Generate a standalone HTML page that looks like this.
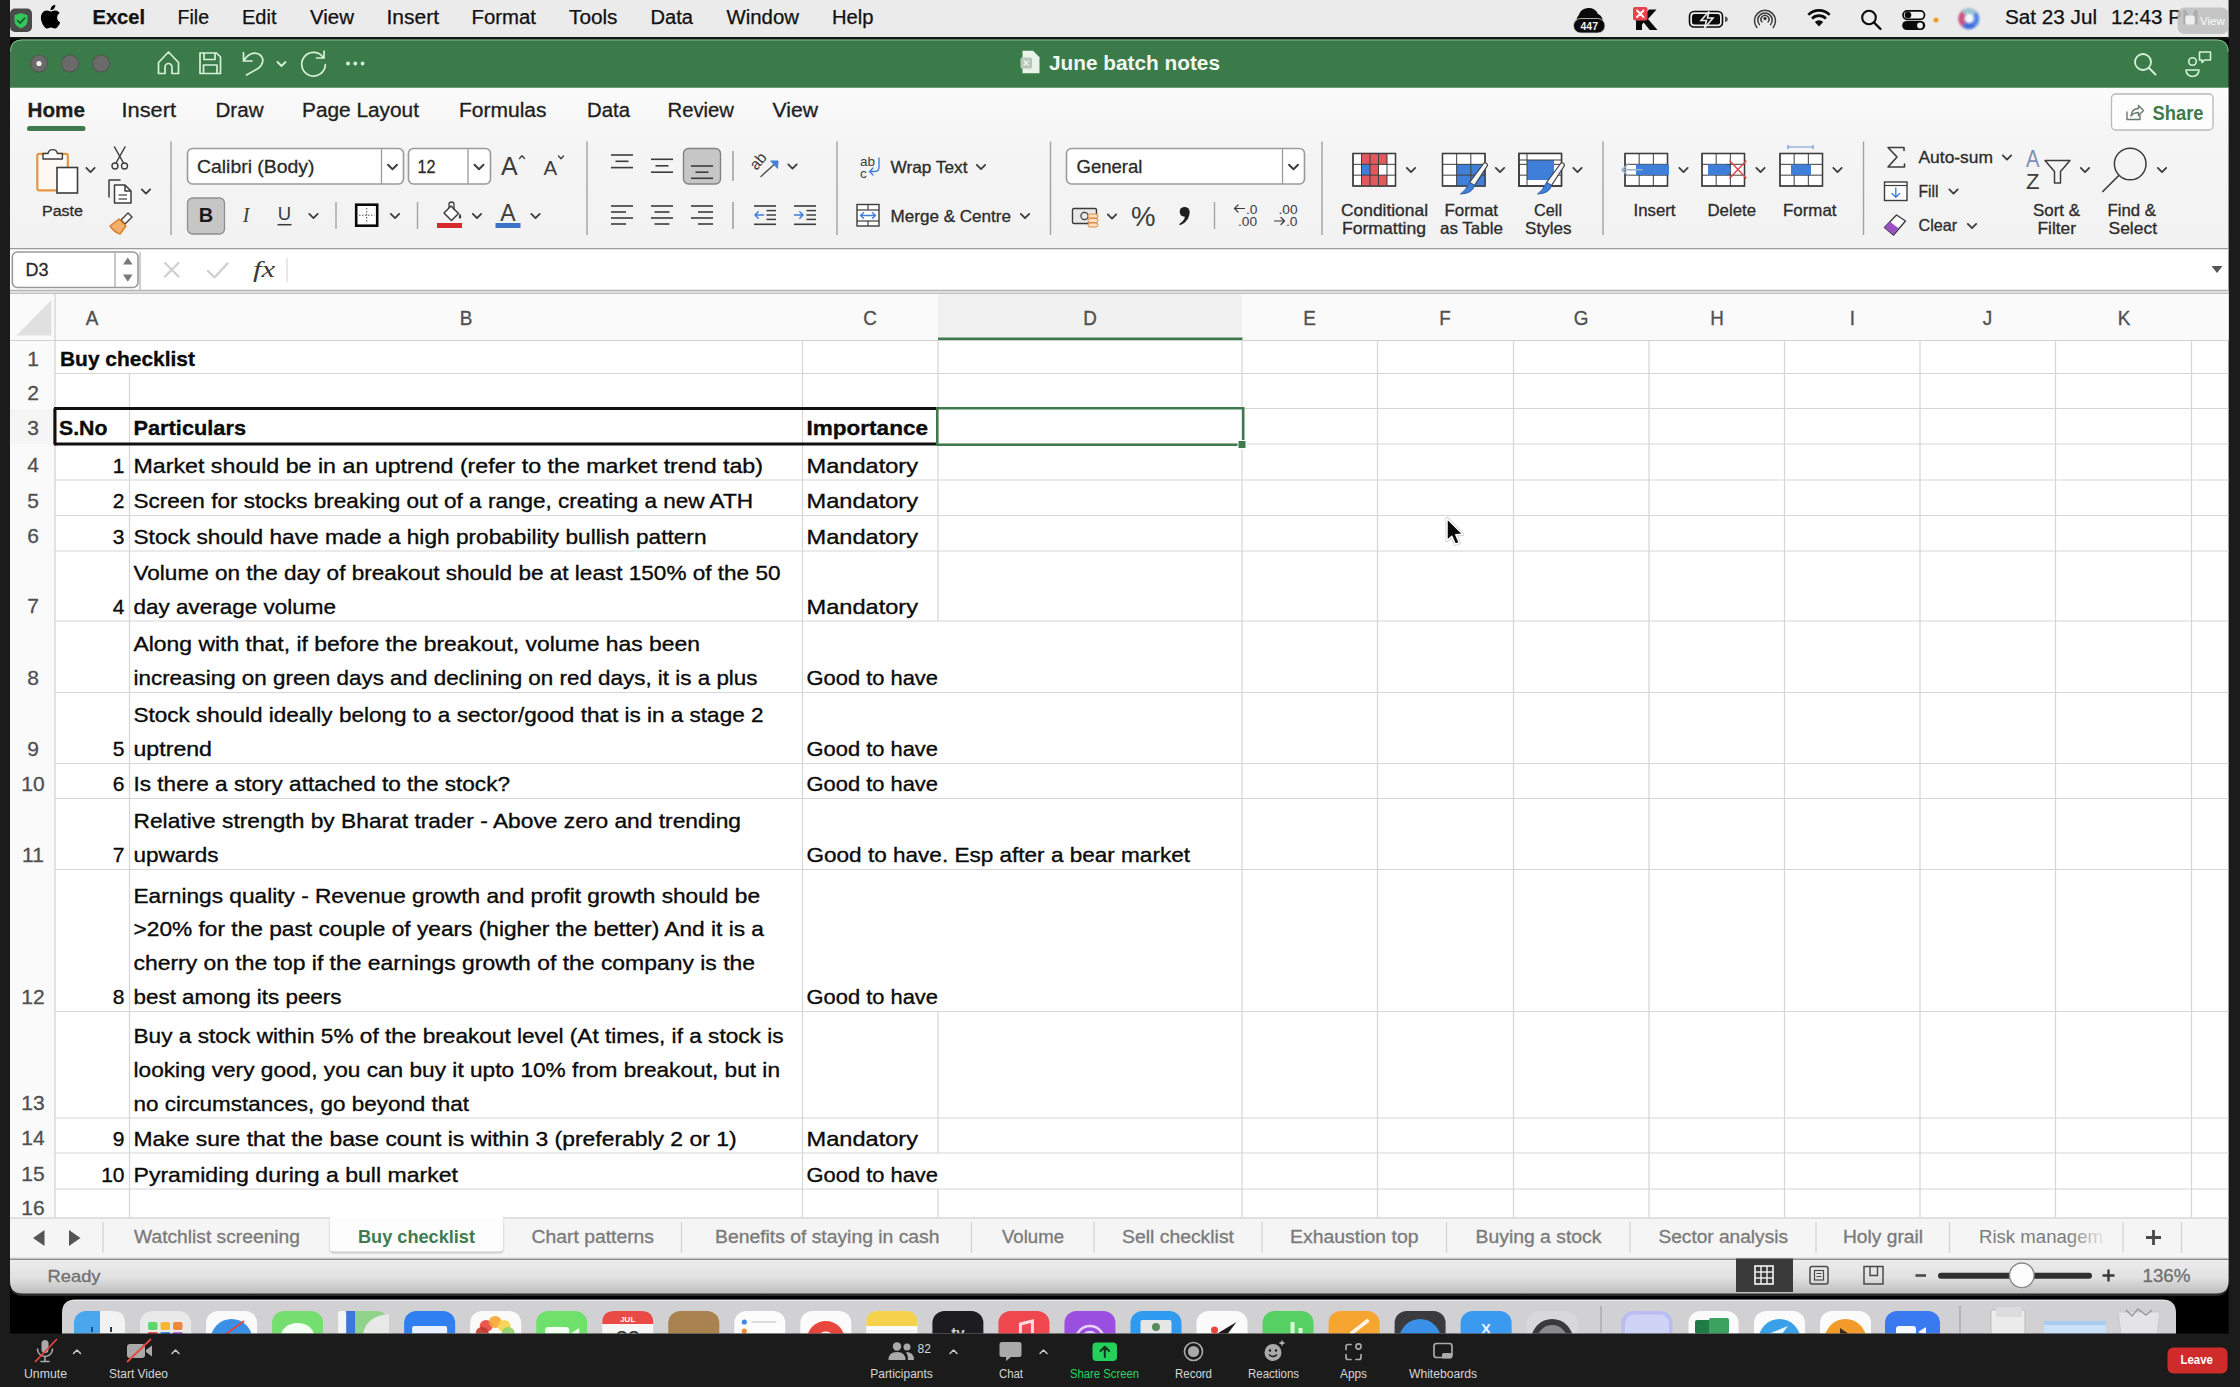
<!DOCTYPE html>
<html lang="en"><head><meta charset="utf-8"><title>June batch notes</title>
<style>
html,body{margin:0;padding:0;background:#000;width:2240px;height:1387px;overflow:hidden}
svg{display:block;font-family:"Liberation Sans",sans-serif}
text{white-space:pre}
</style></head><body>
<svg width="2240" height="1387" viewBox="0 0 2240 1387">
<rect x="0" y="0" width="2240" height="1387" fill="#1b1b1b" />
<rect x="10" y="0" width="2218.6" height="1334" fill="#000" />
<rect x="10" y="0" width="2218.6" height="38" fill="#ebebeb" />
<defs><linearGradient id="rb" x1="0" x2="0" y1="0" y2="1"><stop offset="0" stop-color="#fbfbfb"/><stop offset="0.3" stop-color="#f5f5f5"/><stop offset="1" stop-color="#f2f2f2"/></linearGradient></defs>
<rect x="10" y="87" width="2218.6" height="163" fill="url(#rb)" />
<line x1="10" y1="248.7" x2="2228.6" y2="248.7" stroke="#9c9c9c" stroke-width="1.6" />
<rect x="10" y="249.5" width="2218.6" height="44" fill="#ffffff" />
<rect x="10" y="290" width="2218.6" height="3.8" fill="#dedede" />
<line x1="10" y1="290.4" x2="2228.6" y2="290.4" stroke="#b3b3b3" stroke-width="1.1" />
<line x1="10" y1="293.5" x2="2228.6" y2="293.5" stroke="#c2c2c2" stroke-width="1" />
<rect x="10" y="294" width="2218.6" height="924.4" fill="#ffffff" />
<rect x="10" y="294" width="2218.6" height="46" fill="#fafafa" />
<rect x="10" y="340" width="45" height="878" fill="#fafafa" />
<rect x="938" y="294" width="304" height="45" fill="#f0f1f0" />
<rect x="938" y="337.5" width="304.5" height="3" fill="#3f7a4e" />
<rect x="10" y="408.5" width="45" height="35.5" fill="#f5f5f5" />
<rect x="53" y="408.5" width="2.5" height="36" fill="#3f7a4e" />
<line x1="10" y1="340.5" x2="2228.6" y2="340.5" stroke="#d0d0d0" stroke-width="1.2" />
<line x1="55" y1="294" x2="55" y2="1218" stroke="#d0d0d0" stroke-width="1.2" />
<line x1="55" y1="373.5" x2="2228.6" y2="373.5" stroke="#d6d6d6" stroke-width="1.2" />
<line x1="55" y1="408.5" x2="2228.6" y2="408.5" stroke="#d6d6d6" stroke-width="1.2" />
<line x1="55" y1="444" x2="2228.6" y2="444" stroke="#d6d6d6" stroke-width="1.2" />
<line x1="55" y1="480" x2="2228.6" y2="480" stroke="#d6d6d6" stroke-width="1.2" />
<line x1="55" y1="515.5" x2="2228.6" y2="515.5" stroke="#d6d6d6" stroke-width="1.2" />
<line x1="55" y1="551" x2="2228.6" y2="551" stroke="#d6d6d6" stroke-width="1.2" />
<line x1="55" y1="621" x2="2228.6" y2="621" stroke="#d6d6d6" stroke-width="1.2" />
<line x1="55" y1="692.5" x2="2228.6" y2="692.5" stroke="#d6d6d6" stroke-width="1.2" />
<line x1="55" y1="763.5" x2="2228.6" y2="763.5" stroke="#d6d6d6" stroke-width="1.2" />
<line x1="55" y1="798.5" x2="2228.6" y2="798.5" stroke="#d6d6d6" stroke-width="1.2" />
<line x1="55" y1="869.5" x2="2228.6" y2="869.5" stroke="#d6d6d6" stroke-width="1.2" />
<line x1="55" y1="1011.5" x2="2228.6" y2="1011.5" stroke="#d6d6d6" stroke-width="1.2" />
<line x1="55" y1="1118" x2="2228.6" y2="1118" stroke="#d6d6d6" stroke-width="1.2" />
<line x1="55" y1="1153" x2="2228.6" y2="1153" stroke="#d6d6d6" stroke-width="1.2" />
<line x1="55" y1="1189" x2="2228.6" y2="1189" stroke="#d6d6d6" stroke-width="1.2" />
<line x1="129.5" y1="373.5" x2="129.5" y2="1218" stroke="#d6d6d6" stroke-width="1.2" />
<line x1="802.5" y1="340" x2="802.5" y2="1218" stroke="#d6d6d6" stroke-width="1.2" />
<line x1="938" y1="340" x2="938" y2="621" stroke="#d6d6d6" stroke-width="1.2" />
<line x1="938" y1="1011.5" x2="938" y2="1153" stroke="#d6d6d6" stroke-width="1.2" />
<line x1="938" y1="1189" x2="938" y2="1218" stroke="#d6d6d6" stroke-width="1.2" />
<line x1="1242" y1="340" x2="1242" y2="1218" stroke="#d6d6d6" stroke-width="1.2" />
<line x1="1377.5" y1="340" x2="1377.5" y2="1218" stroke="#d6d6d6" stroke-width="1.2" />
<line x1="1513.5" y1="340" x2="1513.5" y2="1218" stroke="#d6d6d6" stroke-width="1.2" />
<line x1="1649" y1="340" x2="1649" y2="1218" stroke="#d6d6d6" stroke-width="1.2" />
<line x1="1784.5" y1="340" x2="1784.5" y2="1218" stroke="#d6d6d6" stroke-width="1.2" />
<line x1="1920" y1="340" x2="1920" y2="1218" stroke="#d6d6d6" stroke-width="1.2" />
<line x1="2055.5" y1="340" x2="2055.5" y2="1218" stroke="#d6d6d6" stroke-width="1.2" />
<line x1="2191.5" y1="340" x2="2191.5" y2="1218" stroke="#d6d6d6" stroke-width="1.2" />
<path d="M16.500 335.500 L51.300 335.500 L51.300 300 Z" fill="#e0e0e0" />
<text x="85.6966" y="324.8" font-size="21" fill="#505050" textLength="12.6" lengthAdjust="spacingAndGlyphs" stroke="#505050" stroke-width="0.35">A</text>
<text x="459.697" y="324.8" font-size="21" fill="#505050" textLength="12.6" lengthAdjust="spacingAndGlyphs" stroke="#505050" stroke-width="0.35">B</text>
<text x="863.175" y="324.8" font-size="21" fill="#505050" textLength="13.6" lengthAdjust="spacingAndGlyphs" stroke="#505050" stroke-width="0.35">C</text>
<text x="1083.18" y="324.8" font-size="21" fill="#505050" textLength="13.6" lengthAdjust="spacingAndGlyphs" stroke="#505050" stroke-width="0.35">D</text>
<text x="1303.2" y="324.8" font-size="21" fill="#505050" textLength="12.6" lengthAdjust="spacingAndGlyphs" stroke="#505050" stroke-width="0.35">E</text>
<text x="1439.23" y="324.8" font-size="21" fill="#505050" textLength="11.5" lengthAdjust="spacingAndGlyphs" stroke="#505050" stroke-width="0.35">F</text>
<text x="1573.65" y="324.8" font-size="21" fill="#505050" textLength="14.7" lengthAdjust="spacingAndGlyphs" stroke="#505050" stroke-width="0.35">G</text>
<text x="1710.18" y="324.8" font-size="21" fill="#505050" textLength="13.6" lengthAdjust="spacingAndGlyphs" stroke="#505050" stroke-width="0.35">H</text>
<text x="1849.87" y="324.8" font-size="21" fill="#505050" textLength="5.3" lengthAdjust="spacingAndGlyphs" stroke="#505050" stroke-width="0.35">I</text>
<text x="1982.78" y="324.8" font-size="21" fill="#505050" textLength="9.5" lengthAdjust="spacingAndGlyphs" stroke="#505050" stroke-width="0.35">J</text>
<text x="2117.7" y="324.8" font-size="21" fill="#505050" textLength="12.6" lengthAdjust="spacingAndGlyphs" stroke="#505050" stroke-width="0.35">K</text>
<text x="33" y="365.7" font-size="21" fill="#505050" text-anchor="middle" stroke="#505050" stroke-width="0.3">1</text>
<text x="33" y="400.3" font-size="21" fill="#505050" text-anchor="middle" stroke="#505050" stroke-width="0.3">2</text>
<text x="33" y="434.5" font-size="21" fill="#505050" text-anchor="middle" stroke="#505050" stroke-width="0.3">3</text>
<text x="33" y="472.2" font-size="21" fill="#505050" text-anchor="middle" stroke="#505050" stroke-width="0.3">4</text>
<text x="33" y="507.7" font-size="21" fill="#505050" text-anchor="middle" stroke="#505050" stroke-width="0.3">5</text>
<text x="33" y="543.2" font-size="21" fill="#505050" text-anchor="middle" stroke="#505050" stroke-width="0.3">6</text>
<text x="33" y="613.2" font-size="21" fill="#505050" text-anchor="middle" stroke="#505050" stroke-width="0.3">7</text>
<text x="33" y="684.7" font-size="21" fill="#505050" text-anchor="middle" stroke="#505050" stroke-width="0.3">8</text>
<text x="33" y="755.7" font-size="21" fill="#505050" text-anchor="middle" stroke="#505050" stroke-width="0.3">9</text>
<text x="33" y="790.7" font-size="21" fill="#505050" text-anchor="middle" stroke="#505050" stroke-width="0.3">10</text>
<text x="33" y="861.7" font-size="21" fill="#505050" text-anchor="middle" stroke="#505050" stroke-width="0.3">11</text>
<text x="33" y="1003.7" font-size="21" fill="#505050" text-anchor="middle" stroke="#505050" stroke-width="0.3">12</text>
<text x="33" y="1110.2" font-size="21" fill="#505050" text-anchor="middle" stroke="#505050" stroke-width="0.3">13</text>
<text x="33" y="1145.2" font-size="21" fill="#505050" text-anchor="middle" stroke="#505050" stroke-width="0.3">14</text>
<text x="33" y="1181.2" font-size="21" fill="#505050" text-anchor="middle" stroke="#505050" stroke-width="0.3">15</text>
<text x="33" y="1214.8" font-size="21" fill="#505050" text-anchor="middle" stroke="#505050" stroke-width="0.3">16</text>
<rect x="55" y="407" width="883" height="3" fill="#111" />
<rect x="55" y="442.5" width="883" height="3" fill="#111" />
<rect x="54" y="407" width="2.5" height="38.5" fill="#111" />
<text x="60" y="366" font-size="21" fill="#0a0a0a" font-weight="bold" textLength="135" lengthAdjust="spacingAndGlyphs" stroke="#0a0a0a" stroke-width="0.35">Buy checklist</text>
<text x="59" y="434.5" font-size="21" fill="#0a0a0a" font-weight="bold" textLength="48.5" lengthAdjust="spacingAndGlyphs" stroke="#0a0a0a" stroke-width="0.35">S.No</text>
<text x="133.5" y="434.5" font-size="21" fill="#0a0a0a" font-weight="bold" textLength="112.5" lengthAdjust="spacingAndGlyphs" stroke="#0a0a0a" stroke-width="0.35">Particulars</text>
<text x="806.5" y="434.5" font-size="21" fill="#0a0a0a" font-weight="bold" textLength="121.5" lengthAdjust="spacingAndGlyphs" stroke="#0a0a0a" stroke-width="0.35">Importance</text>
<text x="124.5" y="472.7" font-size="21" fill="#0a0a0a" text-anchor="end" stroke="#0a0a0a" stroke-width="0.35">1</text>
<text x="133.5" y="472.7" font-size="21" fill="#0a0a0a" textLength="629.5" lengthAdjust="spacingAndGlyphs" stroke="#0a0a0a" stroke-width="0.35">Market should be in an uptrend (refer to the market trend tab)</text>
<text x="806.5" y="472.7" font-size="21" fill="#0a0a0a" textLength="111.5" lengthAdjust="spacingAndGlyphs" stroke="#0a0a0a" stroke-width="0.35">Mandatory</text>
<text x="124.5" y="508.2" font-size="21" fill="#0a0a0a" text-anchor="end" stroke="#0a0a0a" stroke-width="0.35">2</text>
<text x="133.5" y="508.2" font-size="21" fill="#0a0a0a" textLength="619.5" lengthAdjust="spacingAndGlyphs" stroke="#0a0a0a" stroke-width="0.35">Screen for stocks breaking out of a range, creating a new ATH</text>
<text x="806.5" y="508.2" font-size="21" fill="#0a0a0a" textLength="111.5" lengthAdjust="spacingAndGlyphs" stroke="#0a0a0a" stroke-width="0.35">Mandatory</text>
<text x="124.5" y="543.7" font-size="21" fill="#0a0a0a" text-anchor="end" stroke="#0a0a0a" stroke-width="0.35">3</text>
<text x="133.5" y="543.7" font-size="21" fill="#0a0a0a" textLength="573" lengthAdjust="spacingAndGlyphs" stroke="#0a0a0a" stroke-width="0.35">Stock should have made a high probability bullish pattern</text>
<text x="806.5" y="543.7" font-size="21" fill="#0a0a0a" textLength="111.5" lengthAdjust="spacingAndGlyphs" stroke="#0a0a0a" stroke-width="0.35">Mandatory</text>
<text x="124.5" y="613.7" font-size="21" fill="#0a0a0a" text-anchor="end" stroke="#0a0a0a" stroke-width="0.35">4</text>
<text x="133.5" y="579.8" font-size="21" fill="#0a0a0a" textLength="647" lengthAdjust="spacingAndGlyphs" stroke="#0a0a0a" stroke-width="0.35">Volume on the day of breakout should be at least 150% of the 50</text>
<text x="133.5" y="613.7" font-size="21" fill="#0a0a0a" textLength="202.5" lengthAdjust="spacingAndGlyphs" stroke="#0a0a0a" stroke-width="0.35">day average volume</text>
<text x="806.5" y="613.7" font-size="21" fill="#0a0a0a" textLength="111.5" lengthAdjust="spacingAndGlyphs" stroke="#0a0a0a" stroke-width="0.35">Mandatory</text>
<text x="133.5" y="651.3" font-size="21" fill="#0a0a0a" textLength="566.5" lengthAdjust="spacingAndGlyphs" stroke="#0a0a0a" stroke-width="0.35">Along with that, if before the breakout, volume has been</text>
<text x="133.5" y="685.2" font-size="21" fill="#0a0a0a" textLength="624" lengthAdjust="spacingAndGlyphs" stroke="#0a0a0a" stroke-width="0.35">increasing on green days and declining on red days, it is a plus</text>
<text x="806.5" y="685.2" font-size="21" fill="#0a0a0a" textLength="131.5" lengthAdjust="spacingAndGlyphs" stroke="#0a0a0a" stroke-width="0.35">Good to have</text>
<text x="124.5" y="756.2" font-size="21" fill="#0a0a0a" text-anchor="end" stroke="#0a0a0a" stroke-width="0.35">5</text>
<text x="133.5" y="722.3" font-size="21" fill="#0a0a0a" textLength="630" lengthAdjust="spacingAndGlyphs" stroke="#0a0a0a" stroke-width="0.35">Stock should ideally belong to a sector/good that is in a stage 2</text>
<text x="133.5" y="756.2" font-size="21" fill="#0a0a0a" textLength="78.5" lengthAdjust="spacingAndGlyphs" stroke="#0a0a0a" stroke-width="0.35">uptrend</text>
<text x="806.5" y="756.2" font-size="21" fill="#0a0a0a" textLength="131.5" lengthAdjust="spacingAndGlyphs" stroke="#0a0a0a" stroke-width="0.35">Good to have</text>
<text x="124.5" y="791.2" font-size="21" fill="#0a0a0a" text-anchor="end" stroke="#0a0a0a" stroke-width="0.35">6</text>
<text x="133.5" y="791.2" font-size="21" fill="#0a0a0a" textLength="376.5" lengthAdjust="spacingAndGlyphs" stroke="#0a0a0a" stroke-width="0.35">Is there a story attached to the stock?</text>
<text x="806.5" y="791.2" font-size="21" fill="#0a0a0a" textLength="131.5" lengthAdjust="spacingAndGlyphs" stroke="#0a0a0a" stroke-width="0.35">Good to have</text>
<text x="124.5" y="862.2" font-size="21" fill="#0a0a0a" text-anchor="end" stroke="#0a0a0a" stroke-width="0.35">7</text>
<text x="133.5" y="828.3" font-size="21" fill="#0a0a0a" textLength="607.5" lengthAdjust="spacingAndGlyphs" stroke="#0a0a0a" stroke-width="0.35">Relative strength by Bharat trader - Above zero and trending</text>
<text x="133.5" y="862.2" font-size="21" fill="#0a0a0a" textLength="85" lengthAdjust="spacingAndGlyphs" stroke="#0a0a0a" stroke-width="0.35">upwards</text>
<text x="806.5" y="862.2" font-size="21" fill="#0a0a0a" textLength="383.5" lengthAdjust="spacingAndGlyphs" stroke="#0a0a0a" stroke-width="0.35">Good to have. Esp after a bear market</text>
<text x="124.5" y="1004.2" font-size="21" fill="#0a0a0a" text-anchor="end" stroke="#0a0a0a" stroke-width="0.35">8</text>
<text x="133.5" y="902.5" font-size="21" fill="#0a0a0a" textLength="626.5" lengthAdjust="spacingAndGlyphs" stroke="#0a0a0a" stroke-width="0.35">Earnings quality - Revenue growth and profit growth should be</text>
<text x="133.5" y="936.4" font-size="21" fill="#0a0a0a" textLength="630.5" lengthAdjust="spacingAndGlyphs" stroke="#0a0a0a" stroke-width="0.35">&gt;20% for the past couple of years (higher the better) And it is a</text>
<text x="133.5" y="970.3" font-size="21" fill="#0a0a0a" textLength="621.5" lengthAdjust="spacingAndGlyphs" stroke="#0a0a0a" stroke-width="0.35">cherry on the top if the earnings growth of the company is the</text>
<text x="133.5" y="1004.2" font-size="21" fill="#0a0a0a" textLength="208" lengthAdjust="spacingAndGlyphs" stroke="#0a0a0a" stroke-width="0.35">best among its peers</text>
<text x="806.5" y="1004.2" font-size="21" fill="#0a0a0a" textLength="131.5" lengthAdjust="spacingAndGlyphs" stroke="#0a0a0a" stroke-width="0.35">Good to have</text>
<text x="133.5" y="1042.9" font-size="21" fill="#0a0a0a" textLength="650" lengthAdjust="spacingAndGlyphs" stroke="#0a0a0a" stroke-width="0.35">Buy a stock within 5% of the breakout level (At times, if a stock is</text>
<text x="133.5" y="1076.8" font-size="21" fill="#0a0a0a" textLength="646.5" lengthAdjust="spacingAndGlyphs" stroke="#0a0a0a" stroke-width="0.35">looking very good, you can buy it upto 10% from breakout, but in</text>
<text x="133.5" y="1110.7" font-size="21" fill="#0a0a0a" textLength="335.5" lengthAdjust="spacingAndGlyphs" stroke="#0a0a0a" stroke-width="0.35">no circumstances, go beyond that</text>
<text x="124.5" y="1145.7" font-size="21" fill="#0a0a0a" text-anchor="end" stroke="#0a0a0a" stroke-width="0.35">9</text>
<text x="133.5" y="1145.7" font-size="21" fill="#0a0a0a" textLength="603" lengthAdjust="spacingAndGlyphs" stroke="#0a0a0a" stroke-width="0.35">Make sure that the base count is within 3 (preferably 2 or 1)</text>
<text x="806.5" y="1145.7" font-size="21" fill="#0a0a0a" textLength="111.5" lengthAdjust="spacingAndGlyphs" stroke="#0a0a0a" stroke-width="0.35">Mandatory</text>
<text x="124.5" y="1181.7" font-size="21" fill="#0a0a0a" text-anchor="end" stroke="#0a0a0a" stroke-width="0.35">10</text>
<text x="133.5" y="1181.7" font-size="21" fill="#0a0a0a" textLength="324.5" lengthAdjust="spacingAndGlyphs" stroke="#0a0a0a" stroke-width="0.35">Pyramiding during a bull market</text>
<text x="806.5" y="1181.7" font-size="21" fill="#0a0a0a" textLength="131.5" lengthAdjust="spacingAndGlyphs" stroke="#0a0a0a" stroke-width="0.35">Good to have</text>
<rect x="937.25" y="408.25" width="306" height="36.5" fill="none" stroke="#3f7a4e" stroke-width="2.5" />
<rect x="1238" y="440.5" width="8" height="8" fill="#3f7a4e" stroke="#fff" stroke-width="1" />
<path d="M1447 518.500 L1447 540.500 L1451.800 536.300 L1455.300 544.300 L1459.300 542.700 L1455.800 534.800 L1462.800 534.300 Z" fill="none" stroke="#b0b0b0" stroke-width="3.2" stroke-linejoin="round" opacity="0.6"/>
<path d="M1447 518.500 L1447 540.500 L1451.800 536.300 L1455.300 544.300 L1459.300 542.700 L1455.800 534.800 L1462.800 534.300 Z" fill="#080808" stroke="#fff" stroke-width="1.5" stroke-linejoin="round"/>
<rect x="10" y="8.5" width="22" height="23.5" fill="#4a4a4a" rx="5" />
<path d="M21 13 l6.5 2.2 v5 c0 4.2 -3 6.8 -6.5 8 c-3.5 -1.2 -6.5 -3.8 -6.5 -8 v-5 z" fill="#33c95a" />
<path d="M17.5 20.5 l2.6 2.6 l4.6 -5" fill="none" stroke="#1d5a2d" stroke-width="1.6" stroke-linecap="round" stroke-linejoin="round"/>
<path d="M55.6 17.9c0-3 2.5-4.5 2.6-4.5-1.4-2.1-3.6-2.4-4.4-2.4-1.9-.2-3.6 1.1-4.6 1.1-.9 0-2.4-1.1-3.9-1-2 0-3.9 1.200-4.900 3-2.100 3.600-.5 9 1.500 12 1 1.400 2.200 3.100 3.700 3 1.500-.1 2.100-1 3.900-1 1.800 0 2.300 1 3.900.9 1.600 0 2.700-1.500 3.700-2.900 1.100-1.700 1.600-3.300 1.600-3.400-.1 0-3.100-1.200-3.100-4.800zM52.600 9c.800-1 1.400-2.400 1.200-3.800-1.200.1-2.600.8-3.500 1.800-.8.9-1.400 2.300-1.300 3.700 1.400.1 2.800-.7 3.600-1.700z" fill="#000" transform="translate(1.5 -0.5)"/>
<text x="92.5" y="24.2" font-size="19.5" fill="#111" font-weight="bold" textLength="52.5" lengthAdjust="spacingAndGlyphs" stroke="#111" stroke-width="0.25">Excel</text>
<text x="177.5" y="24.2" font-size="19.5" fill="#111" textLength="31.5" lengthAdjust="spacingAndGlyphs" stroke="#111" stroke-width="0.25">File</text>
<text x="242" y="24.2" font-size="19.5" fill="#111" textLength="34.5" lengthAdjust="spacingAndGlyphs" stroke="#111" stroke-width="0.25">Edit</text>
<text x="310" y="24.2" font-size="19.5" fill="#111" textLength="44" lengthAdjust="spacingAndGlyphs" stroke="#111" stroke-width="0.25">View</text>
<text x="386.5" y="24.2" font-size="19.5" fill="#111" textLength="52.5" lengthAdjust="spacingAndGlyphs" stroke="#111" stroke-width="0.25">Insert</text>
<text x="471.5" y="24.2" font-size="19.5" fill="#111" textLength="64.5" lengthAdjust="spacingAndGlyphs" stroke="#111" stroke-width="0.25">Format</text>
<text x="569" y="24.2" font-size="19.5" fill="#111" textLength="48.5" lengthAdjust="spacingAndGlyphs" stroke="#111" stroke-width="0.25">Tools</text>
<text x="650.5" y="24.2" font-size="19.5" fill="#111" textLength="42.5" lengthAdjust="spacingAndGlyphs" stroke="#111" stroke-width="0.25">Data</text>
<text x="726.5" y="24.2" font-size="19.5" fill="#111" textLength="72.5" lengthAdjust="spacingAndGlyphs" stroke="#111" stroke-width="0.25">Window</text>
<text x="832" y="24.2" font-size="19.5" fill="#111" textLength="41.5" lengthAdjust="spacingAndGlyphs" stroke="#111" stroke-width="0.25">Help</text>
<path d="M1577 22 a6.500 6.500 0 0 1 1.500 -6.500 a10.500 10.500 0 0 1 19.500 -1.500 a7 7 0 0 1 4.500 8 z" fill="#0a0a0a" />
<rect x="1573.5" y="18.5" width="31.5" height="14.5" fill="#0a0a0a" rx="7.2" stroke="#d8d8d8" stroke-width="0.8" />
<text x="1589.3" y="29.8" font-size="10.5" fill="#f0f0f0" font-weight="bold" text-anchor="middle" >447</text>
<path d="M1636 9.500 h6 v8 l7 -8 h7.500 l-8.500 9.500 l9.500 11 h-7.800 l-6 -7.500 l-1.700 1.900 v5.600 h-6 z" fill="#0a0a0a" />
<rect x="1633" y="7" width="14.5" height="13.5" fill="#e8464c" rx="2" />
<path d="M1637 10.500 l6.500 6.500 m0 -6.500 l-6.500 6.500" fill="none" stroke="#fff" stroke-width="1.8" stroke-linecap="round"/>
<rect x="1689.5" y="11.5" width="33" height="15.5" fill="none" rx="4.5" stroke="#0a0a0a" stroke-width="1.6" />
<rect x="1692" y="14" width="28" height="10.5" fill="#0a0a0a" rx="2.5" />
<path d="M1725 16.500 v5.500 a2.500 2.500 0 0 0 0 -5.500z" fill="#555" />
<path d="M1709 11.500 l-8 9 h5.500 l-2 7.500 l8.500 -10 h-5.500 z" fill="#0a0a0a" stroke="#ebebeb" stroke-width="1.6" />
<path d="M1756.81 27.425 A10.5 10.5 0 1 1 1773.19 27.425" fill="none" stroke="#3a3a3a" stroke-width="1.5" stroke-linecap="round"/>
<path d="M1759.38 24.62 A7.2 7.2 0 1 1 1770.62 24.62" fill="none" stroke="#3a3a3a" stroke-width="1.5" stroke-linecap="round"/>
<path d="M1761.88 21.9 A4 4 0 1 1 1768.12 21.9" fill="none" stroke="#3a3a3a" stroke-width="1.5" stroke-linecap="round"/>
<circle cx="1765" cy="18.5" r="1.7" fill="#3a3a3a" />
<path d="M1808.35 14.85 A15 15 0 0 1 1829.65 14.85" fill="none" stroke="#0a0a0a" stroke-width="2.6" stroke-linecap="butt"/>
<path d="M1812.04 18.542 A9.8 9.8 0 0 1 1825.96 18.542" fill="none" stroke="#0a0a0a" stroke-width="2.6" stroke-linecap="butt"/>
<path d="M1819 26.500 l-4.200 -4.600 a6 6 0 0 1 8.400 0 z" fill="#0a0a0a" />
<circle cx="1869" cy="17.5" r="6.8" fill="none" stroke="#0a0a0a" stroke-width="2.1" />
<line x1="1874" y1="22.5" x2="1880.5" y2="29" stroke="#0a0a0a" stroke-width="2.4" stroke-linecap="round"/>
<rect x="1903" y="10.8" width="21.5" height="8.5" fill="#f4f4f4" rx="4.2" stroke="#0a0a0a" stroke-width="1.7" />
<circle cx="1908" cy="15" r="3.3" fill="#0a0a0a" />
<rect x="1902.2" y="21" width="23" height="9" fill="#0a0a0a" rx="4.5" />
<circle cx="1920" cy="25.5" r="2.9" fill="#f0f0f0" />
<circle cx="1936" cy="20" r="2.6" fill="#f0a030" />
<defs><filter id="sblur" x="-20%" y="-20%" width="140%" height="140%"><feGaussianBlur stdDeviation="0.9"/></filter></defs>
<g filter="url(#sblur)">
<circle cx="1968.8" cy="18.8" r="10.6" fill="#8a93c8" />
<path d="M1964.04 24.47 A7.4 7.4 0 0 1 1964.04 13.13" fill="none" stroke="#d2527e" stroke-width="5.6" />
<path d="M1964.04 13.13 A7.4 7.4 0 0 1 1974.47 14.04" fill="none" stroke="#9cc7cf" stroke-width="5.6" />
<path d="M1974.47 14.04 A7.4 7.4 0 0 1 1973.56 24.47" fill="none" stroke="#4f86e6" stroke-width="5.6" />
<path d="M1973.56 24.47 A7.4 7.4 0 0 1 1964.04 24.47" fill="none" stroke="#3a6fe0" stroke-width="5.6" />
<circle cx="1969.3" cy="18.3" r="4.4" fill="#f4f7ff" />
</g>
<text x="2005" y="24.4" font-size="19.5" fill="#111" textLength="92" lengthAdjust="spacingAndGlyphs" stroke="#111" stroke-width="0.25">Sat 23 Jul</text>
<text x="2111" y="24.4" font-size="19.5" fill="#111" textLength="88" lengthAdjust="spacingAndGlyphs" stroke="#111" stroke-width="0.25">12:43 PM</text>
<rect x="2177.5" y="7.5" width="51" height="26.5" fill="#bfbfbf" rx="7" opacity="0.88"/>
<rect x="2185.5" y="15.5" width="9" height="9" fill="#efefef" rx="1.5" />
<text x="2200" y="24.5" font-size="11.5" fill="#fafafa" >View</text>
<rect x="10" y="37" width="2218.6" height="2.5" fill="#151515" />
<path d="M10 87.7 V51.5 Q10 39.5 22 39.5 H2216.6 Q2228.6 39.5 2228.6 51.5 V87.7 Z" fill="#3b7b49" />
<path d="M10.5 51.5 Q10.5 40 22 40 H2216.6 Q2228.1 40 2228.1 51.5" fill="none" stroke="#8fc09a" stroke-width="0.9" />
<circle cx="39" cy="63.5" r="8.5" fill="#6a6a6a" stroke="#50594f" stroke-width="1.2" />
<circle cx="70" cy="63.5" r="8.5" fill="#6a6a6a" stroke="#50594f" stroke-width="1.2" />
<circle cx="101" cy="63.5" r="8.5" fill="#6a6a6a" stroke="#50594f" stroke-width="1.2" />
<circle cx="39" cy="63.5" r="2.6" fill="#f2f2f2" />
<path d="M158.500 62.500 L168.500 52 L178.500 62.500 V73.500 H172 V67 a3.500 3.500 0 0 0 -7 0 V73.500 H158.500 Z" fill="none" stroke="#d6f1da" stroke-width="1.7" stroke-linecap="round" stroke-linejoin="round"/>
<path d="M200 53 H216.500 L220.500 57 V73.500 H200 Z M204 53 V59.500 H215 V53 M203.500 73.500 V65 H217 V73.500" fill="none" stroke="#d6f1da" stroke-width="1.7" stroke-linecap="round" stroke-linejoin="round"/>
<path d="M243.500 52.500 V61 H252 M243.800 60.500 C247 54.500 254 51 259.500 54.500 C265 58.500 263 65 258 68.500 L246.500 75" fill="none" stroke="#d6f1da" stroke-width="1.7" stroke-linecap="round" stroke-linejoin="round"/>
<path d="M277.5 62 L281.5 66 L285.5 62" fill="none" stroke="#d6f1da" stroke-width="1.8" stroke-linecap="round" stroke-linejoin="round"/>
<path d="M324 51 V58 H316.500 M322.800 57 A11.800 11.800 0 1 0 325.300 64.500" fill="none" stroke="#d6f1da" stroke-width="1.7" stroke-linecap="round" stroke-linejoin="round"/>
<circle cx="348" cy="63.5" r="1.9" fill="#d6f1da" />
<circle cx="355.3" cy="63.5" r="1.9" fill="#d6f1da" />
<circle cx="362.6" cy="63.5" r="1.9" fill="#d6f1da" />
<path d="M1022.500 50.800 h10.500 l6.500 6.500 v16 h-17 z" fill="#e9f3ea" />
<rect x="1020.5" y="57.5" width="11.5" height="11" fill="#b4c9b8" rx="1.5" />
<path d="M1023.700 60.500 l5 5 m0 -5 l-5 5" fill="none" stroke="#eef5ef" stroke-width="1.5" />
<text x="1049" y="70" font-size="19.5" fill="#f3f8f3" font-weight="bold" textLength="171" lengthAdjust="spacingAndGlyphs" >June batch notes</text>
<circle cx="2143" cy="62" r="8" fill="none" stroke="#d6f1da" stroke-width="1.8" />
<line x1="2149" y1="68" x2="2155.5" y2="74.5" stroke="#d6f1da" stroke-width="2" stroke-linecap="round"/>
<circle cx="2192.5" cy="61.5" r="3.8" fill="none" stroke="#d6f1da" stroke-width="1.6" />
<path d="M2186 70 h13 a6.500 6.500 0 0 1 -13 0 z" fill="none" stroke="#d6f1da" stroke-width="1.6" stroke-linecap="round" stroke-linejoin="round"/>
<path d="M2199.500 52 h11 v8 h-6 l-2.500 2.500 v-2.500 h-2.500 z" fill="none" stroke="#d6f1da" stroke-width="1.6" stroke-linecap="round" stroke-linejoin="round"/>
<text x="27.5" y="117" font-size="19.5" fill="#1e1e1e" font-weight="bold" textLength="57.5" lengthAdjust="spacingAndGlyphs" stroke="#1e1e1e" stroke-width="0.3">Home</text>
<text x="121.5" y="117" font-size="19.5" fill="#1e1e1e" textLength="54.5" lengthAdjust="spacingAndGlyphs" stroke="#1e1e1e" stroke-width="0.3">Insert</text>
<text x="215.5" y="117" font-size="19.5" fill="#1e1e1e" textLength="48" lengthAdjust="spacingAndGlyphs" stroke="#1e1e1e" stroke-width="0.3">Draw</text>
<text x="302" y="117" font-size="19.5" fill="#1e1e1e" textLength="117" lengthAdjust="spacingAndGlyphs" stroke="#1e1e1e" stroke-width="0.3">Page Layout</text>
<text x="459" y="117" font-size="19.5" fill="#1e1e1e" textLength="87.5" lengthAdjust="spacingAndGlyphs" stroke="#1e1e1e" stroke-width="0.3">Formulas</text>
<text x="587" y="117" font-size="19.5" fill="#1e1e1e" textLength="43" lengthAdjust="spacingAndGlyphs" stroke="#1e1e1e" stroke-width="0.3">Data</text>
<text x="667.5" y="117" font-size="19.5" fill="#1e1e1e" textLength="66.5" lengthAdjust="spacingAndGlyphs" stroke="#1e1e1e" stroke-width="0.3">Review</text>
<text x="772.5" y="117" font-size="19.5" fill="#1e1e1e" textLength="45.5" lengthAdjust="spacingAndGlyphs" stroke="#1e1e1e" stroke-width="0.3">View</text>
<rect x="27" y="126" width="58.5" height="5" fill="#3f7a4e" rx="2.5" />
<rect x="2111.5" y="94" width="101.5" height="36" fill="#fdfdfd" rx="4" stroke="#b9b9b9" stroke-width="1.3" />
<path d="M2127 112 v7.500 h13 v-4 M2131 116 c0.500 -5 3 -7.500 7.500 -7.500 v-3 l5 5 l-5 5 v-3 c-3.500 0 -5.500 1 -7.500 3.500z" fill="none" stroke="#6a7a6e" stroke-width="1.4" stroke-linecap="round" stroke-linejoin="round"/>
<text x="2152.5" y="120.3" font-size="19.5" fill="#3f7a4e" font-weight="bold" textLength="51" lengthAdjust="spacingAndGlyphs" >Share</text>
<rect x="37.3" y="153.8" width="30.5" height="36.5" fill="#fcf8f3" rx="2" stroke="#e8963f" stroke-width="2.2" />
<path d="M43 159 v-5.500 h5 a4.800 4.800 0 0 1 9.400 0 h5 v5.500 z" fill="#fbfbfb" stroke="#3c3c3c" stroke-width="1.4" stroke-linecap="round" stroke-linejoin="round"/>
<rect x="57" y="167.5" width="20.5" height="25.5" fill="#ffffff" stroke="#3c3c3c" stroke-width="1.6" />
<text x="42" y="215.5" font-size="15.5" fill="#2b2b2b" textLength="41" lengthAdjust="spacingAndGlyphs" stroke="#2b2b2b" stroke-width="0.3">Paste</text>
<path d="M86.3 167.9 L90.5 172.1 L94.7 167.9" fill="none" stroke="#3c3c3c" stroke-width="1.8" stroke-linecap="round" stroke-linejoin="round"/>
<path d="M114.500 147 L123.500 163 M125 147 L116 163" fill="none" stroke="#3c3c3c" stroke-width="1.5" stroke-linecap="round" stroke-linejoin="round"/>
<circle cx="115" cy="166" r="3" fill="none" stroke="#3c3c3c" stroke-width="1.4" />
<circle cx="124.5" cy="166" r="3" fill="none" stroke="#3c3c3c" stroke-width="1.4" />
<path d="M109 197 V180 H120" fill="none" stroke="#3c3c3c" stroke-width="1.5" stroke-linecap="round" stroke-linejoin="round"/>
<path d="M114.500 185 H125 L131 191 V203 H114.500 Z M125 185 V191 H131" fill="#fff" stroke="#3c3c3c" stroke-width="1.5" stroke-linecap="round" stroke-linejoin="round"/>
<line x1="118.5" y1="195" x2="127" y2="195" stroke="#3c3c3c" stroke-width="1.2" />
<line x1="118.5" y1="199" x2="127" y2="199" stroke="#3c3c3c" stroke-width="1.2" />
<path d="M141.8 189.4 L146 193.6 L150.2 189.4" fill="none" stroke="#3c3c3c" stroke-width="1.8" stroke-linecap="round" stroke-linejoin="round"/>
<path d="M121 220 l7 -7 l4 4 l-7 7 z" fill="#fff" stroke="#3c3c3c" stroke-width="1.4" stroke-linecap="round" stroke-linejoin="round"/>
<path d="M110 226 l9 -7 l7 7 l-6 8 q-6 -2 -10 -8 z" fill="#f3b06a" stroke="#d97f2b" stroke-width="1.4" stroke-linecap="round" stroke-linejoin="round"/>
<line x1="171" y1="141.5" x2="171" y2="235" stroke="#a3a3a3" stroke-width="1.4" />
<rect x="187.5" y="148.5" width="216" height="35.5" fill="#ffffff" rx="5" stroke="#9a9a9a" stroke-width="1.6" />
<line x1="381.5" y1="149" x2="381.5" y2="184" stroke="#9a9a9a" stroke-width="1.3" />
<text x="197" y="173" font-size="18.5" fill="#2b2b2b" textLength="117.5" lengthAdjust="spacingAndGlyphs" stroke="#2b2b2b" stroke-width="0.3">Calibri (Body)</text>
<path d="M388 164.75 L392.5 169.25 L397 164.75" fill="none" stroke="#3c3c3c" stroke-width="1.9" stroke-linecap="round" stroke-linejoin="round"/>
<rect x="408.5" y="148.5" width="82" height="35.5" fill="#ffffff" rx="5" stroke="#9a9a9a" stroke-width="1.6" />
<line x1="468" y1="149" x2="468" y2="184" stroke="#9a9a9a" stroke-width="1.3" />
<text x="417.5" y="173" font-size="18.5" fill="#2b2b2b" textLength="18" lengthAdjust="spacingAndGlyphs" stroke="#2b2b2b" stroke-width="0.3">12</text>
<path d="M474.5 164.75 L479 169.25 L483.5 164.75" fill="none" stroke="#3c3c3c" stroke-width="1.9" stroke-linecap="round" stroke-linejoin="round"/>
<text x="501" y="175" font-size="25" fill="#3c3c3c" >A</text>
<path d="M519.500 158.500 l2.500 -2.800 l2.500 2.800" fill="none" stroke="#3c3c3c" stroke-width="1.3" stroke-linecap="round" stroke-linejoin="round"/>
<text x="543.5" y="175" font-size="20.5" fill="#3c3c3c" >A</text>
<path d="M558.500 156 l2.500 2.800 l2.500 -2.800" fill="none" stroke="#3c3c3c" stroke-width="1.3" stroke-linecap="round" stroke-linejoin="round"/>
<rect x="187.5" y="198" width="37" height="36" fill="#c6c6c6" rx="5" stroke="#8f8f8f" stroke-width="1.3" />
<text x="206" y="222" font-size="20" fill="#1a1a1a" font-weight="bold" text-anchor="middle" >B</text>
<text x="246" y="221.8" font-size="20" fill="#3c3c3c" text-anchor="middle" font-family="'Liberation Serif',serif" font-style="italic" >I</text>
<text x="284.5" y="220.3" font-size="18.5" fill="#3c3c3c" text-anchor="middle" >U</text>
<line x1="277.5" y1="224.7" x2="291.5" y2="224.7" stroke="#3c3c3c" stroke-width="1.5" />
<path d="M309.3 213.9 L313.5 218.1 L317.7 213.9" fill="none" stroke="#3c3c3c" stroke-width="1.8" stroke-linecap="round" stroke-linejoin="round"/>
<line x1="336" y1="202" x2="336" y2="229" stroke="#a3a3a3" stroke-width="1.4" />
<rect x="356.2" y="204.7" width="21" height="21" fill="#ffffff" stroke="#0a0a0a" stroke-width="2.6" />
<line x1="366.7" y1="208" x2="366.7" y2="223" stroke="#555" stroke-width="1" stroke-dasharray="1.5 1.5"/>
<line x1="359" y1="215.2" x2="374.5" y2="215.2" stroke="#555" stroke-width="1" stroke-dasharray="1.5 1.5"/>
<path d="M390.8 213.9 L395 218.1 L399.2 213.9" fill="none" stroke="#3c3c3c" stroke-width="1.8" stroke-linecap="round" stroke-linejoin="round"/>
<line x1="417.5" y1="202" x2="417.5" y2="229" stroke="#a3a3a3" stroke-width="1.4" />
<path d="M444 213 l7 -7 l7.500 7.500 l-7 7 z" fill="#fff" stroke="#3c3c3c" stroke-width="1.5" stroke-linecap="round" stroke-linejoin="round"/>
<path d="M449 207.500 v-3 a2.500 2.500 0 0 1 5 0 v5" fill="none" stroke="#3c3c3c" stroke-width="1.3" stroke-linecap="round" stroke-linejoin="round"/>
<path d="M460 213.500 q2.500 4 0 5.500 q-2.500 -1.500 0 -5.500z" fill="#3c3c3c" />
<rect x="437" y="223" width="25" height="5" fill="#d8282f" />
<path d="M472.8 213.9 L477 218.1 L481.2 213.9" fill="none" stroke="#3c3c3c" stroke-width="1.8" stroke-linecap="round" stroke-linejoin="round"/>
<text x="508" y="220.5" font-size="23" fill="#3c3c3c" text-anchor="middle" >A</text>
<rect x="495.5" y="223" width="25" height="5" fill="#3c73c9" />
<path d="M531.3 213.9 L535.5 218.1 L539.7 213.9" fill="none" stroke="#3c3c3c" stroke-width="1.8" stroke-linecap="round" stroke-linejoin="round"/>
<line x1="587" y1="141.5" x2="587" y2="235" stroke="#a3a3a3" stroke-width="1.4" />
<line x1="611" y1="155" x2="633" y2="155" stroke="#3c3c3c" stroke-width="1.6" />
<line x1="615.5" y1="161.3" x2="628.5" y2="161.3" stroke="#3c3c3c" stroke-width="1.6" />
<line x1="611" y1="167.6" x2="633" y2="167.6" stroke="#3c3c3c" stroke-width="1.6" />
<line x1="651" y1="159.3" x2="673" y2="159.3" stroke="#3c3c3c" stroke-width="1.6" />
<line x1="655.5" y1="165.8" x2="668.5" y2="165.8" stroke="#3c3c3c" stroke-width="1.6" />
<line x1="651" y1="172.2" x2="673" y2="172.2" stroke="#3c3c3c" stroke-width="1.6" />
<rect x="683.5" y="148.5" width="37" height="35.5" fill="#c6c6c6" rx="5" stroke="#828282" stroke-width="1.4" />
<line x1="691" y1="166" x2="713" y2="166" stroke="#3c3c3c" stroke-width="1.6" />
<line x1="695.5" y1="172.2" x2="708.5" y2="172.2" stroke="#3c3c3c" stroke-width="1.6" />
<line x1="691" y1="178.3" x2="713" y2="178.3" stroke="#3c3c3c" stroke-width="1.6" />
<line x1="733" y1="151" x2="733" y2="181" stroke="#a3a3a3" stroke-width="1.6" />
<line x1="611" y1="206" x2="633" y2="206" stroke="#3c3c3c" stroke-width="1.6" />
<line x1="611" y1="212" x2="626" y2="212" stroke="#3c3c3c" stroke-width="1.6" />
<line x1="611" y1="218" x2="633" y2="218" stroke="#3c3c3c" stroke-width="1.6" />
<line x1="611" y1="224" x2="626" y2="224" stroke="#3c3c3c" stroke-width="1.6" />
<line x1="651" y1="206" x2="673" y2="206" stroke="#3c3c3c" stroke-width="1.6" />
<line x1="654.5" y1="212" x2="669.5" y2="212" stroke="#3c3c3c" stroke-width="1.6" />
<line x1="651" y1="218" x2="673" y2="218" stroke="#3c3c3c" stroke-width="1.6" />
<line x1="654.5" y1="224" x2="669.5" y2="224" stroke="#3c3c3c" stroke-width="1.6" />
<line x1="691" y1="206" x2="713" y2="206" stroke="#3c3c3c" stroke-width="1.6" />
<line x1="698" y1="212" x2="713" y2="212" stroke="#3c3c3c" stroke-width="1.6" />
<line x1="691" y1="218" x2="713" y2="218" stroke="#3c3c3c" stroke-width="1.6" />
<line x1="698" y1="224" x2="713" y2="224" stroke="#3c3c3c" stroke-width="1.6" />
<line x1="733" y1="202" x2="733" y2="229" stroke="#a3a3a3" stroke-width="1.6" />
<text x="0" y="0" font-size="15.5" fill="#3c3c3c" transform="translate(756.500 171) rotate(-50)">ab</text>
<path d="M761 176.500 L777.500 161.500" fill="none" stroke="#555" stroke-width="1.5" stroke-linecap="round" stroke-linejoin="round"/>
<path d="M771 161 L778 161 L777.500 168 Z" fill="#3f7fd9" stroke="#3f7fd9" stroke-width="1" stroke-linecap="round" stroke-linejoin="round"/>
<path d="M788.3 164.4 L792.5 168.6 L796.7 164.4" fill="none" stroke="#3c3c3c" stroke-width="1.8" stroke-linecap="round" stroke-linejoin="round"/>
<line x1="754" y1="206" x2="776" y2="206" stroke="#3c3c3c" stroke-width="1.6" />
<line x1="754" y1="224.3" x2="776" y2="224.3" stroke="#3c3c3c" stroke-width="1.6" />
<line x1="766.5" y1="210.6" x2="776" y2="210.6" stroke="#3c3c3c" stroke-width="1.5" />
<line x1="766.5" y1="215" x2="776" y2="215" stroke="#3c3c3c" stroke-width="1.5" />
<line x1="766.5" y1="219.4" x2="776" y2="219.4" stroke="#3c3c3c" stroke-width="1.5" />
<path d="M763.5 215 H755 M758.2 211.800 l-3.200 3.200 l3.200 3.200" fill="none" stroke="#3f7fd9" stroke-width="1.5" stroke-linecap="round" stroke-linejoin="round"/>
<line x1="794" y1="206" x2="816" y2="206" stroke="#3c3c3c" stroke-width="1.6" />
<line x1="794" y1="224.3" x2="816" y2="224.3" stroke="#3c3c3c" stroke-width="1.6" />
<line x1="806.5" y1="210.6" x2="816" y2="210.6" stroke="#3c3c3c" stroke-width="1.5" />
<line x1="806.5" y1="215" x2="816" y2="215" stroke="#3c3c3c" stroke-width="1.5" />
<line x1="806.5" y1="219.4" x2="816" y2="219.4" stroke="#3c3c3c" stroke-width="1.5" />
<path d="M794.5 215 H803 M799.8 211.800 l3.200 3.200 l-3.200 3.200" fill="none" stroke="#3f7fd9" stroke-width="1.5" stroke-linecap="round" stroke-linejoin="round"/>
<line x1="837" y1="141.5" x2="837" y2="235" stroke="#a3a3a3" stroke-width="1.4" />
<text x="860" y="165.5" font-size="13.5" fill="#3c3c3c" >ab</text>
<text x="860" y="177.5" font-size="13.5" fill="#3c3c3c" >c</text>
<path d="M879 158 v9 q0 4.500 -4 4.500 h-5 M873 168 l-3.500 3.500 l3.500 3.500" fill="none" stroke="#3f7fd9" stroke-width="1.4" stroke-linecap="round" stroke-linejoin="round"/>
<text x="890.5" y="172.5" font-size="16.5" fill="#2b2b2b" textLength="77" lengthAdjust="spacingAndGlyphs" stroke="#2b2b2b" stroke-width="0.3">Wrap Text</text>
<path d="M976.8 164.9 L981 169.1 L985.2 164.9" fill="none" stroke="#3c3c3c" stroke-width="1.8" stroke-linecap="round" stroke-linejoin="round"/>
<rect x="857" y="204.5" width="22" height="21.5" fill="#ffffff" stroke="#3c3c3c" stroke-width="1.4" />
<line x1="857" y1="210" x2="879" y2="210" stroke="#3c3c3c" stroke-width="1.2" />
<line x1="857" y1="221" x2="879" y2="221" stroke="#3c3c3c" stroke-width="1.2" />
<line x1="868" y1="204.5" x2="868" y2="210" stroke="#3c3c3c" stroke-width="1.2" />
<line x1="868" y1="221" x2="868" y2="226" stroke="#3c3c3c" stroke-width="1.2" />
<path d="M860.500 215.500 H875.500 M863.500 212.800 l-3 2.700 l3 2.700 M872.500 212.800 l3 2.700 l-3 2.700" fill="none" stroke="#3f7fd9" stroke-width="1.4" stroke-linecap="round" stroke-linejoin="round"/>
<text x="890.5" y="222" font-size="16.5" fill="#2b2b2b" textLength="120.5" lengthAdjust="spacingAndGlyphs" stroke="#2b2b2b" stroke-width="0.3">Merge &amp; Centre</text>
<path d="M1020.8 213.9 L1025 218.1 L1029.2 213.9" fill="none" stroke="#3c3c3c" stroke-width="1.8" stroke-linecap="round" stroke-linejoin="round"/>
<line x1="1050.5" y1="141.5" x2="1050.5" y2="235" stroke="#a3a3a3" stroke-width="1.4" />
<rect x="1066.5" y="148.5" width="238" height="35.5" fill="#ffffff" rx="5" stroke="#9a9a9a" stroke-width="1.6" />
<line x1="1282.5" y1="149" x2="1282.5" y2="184" stroke="#9a9a9a" stroke-width="1.3" />
<text x="1076.5" y="173" font-size="18.5" fill="#2b2b2b" textLength="66" lengthAdjust="spacingAndGlyphs" stroke="#2b2b2b" stroke-width="0.3">General</text>
<path d="M1289 164.75 L1293.5 169.25 L1298 164.75" fill="none" stroke="#3c3c3c" stroke-width="1.9" stroke-linecap="round" stroke-linejoin="round"/>
<rect x="1072.5" y="208.5" width="24" height="15" fill="#e9e9e9" rx="1.5" stroke="#3c3c3c" stroke-width="1.4" />
<circle cx="1084.5" cy="216" r="3.6" fill="none" stroke="#3c3c3c" stroke-width="1.2" />
<rect x="1088" y="214" width="10" height="4" fill="#fbe0c4" rx="2" stroke="#e08a3c" stroke-width="1" />
<rect x="1088" y="218.5" width="10" height="4" fill="#fbe0c4" rx="2" stroke="#e08a3c" stroke-width="1" />
<rect x="1088" y="223" width="10" height="4" fill="#fbe0c4" rx="2" stroke="#e08a3c" stroke-width="1" />
<path d="M1107.8 214.4 L1112 218.6 L1116.2 214.4" fill="none" stroke="#3c3c3c" stroke-width="1.8" stroke-linecap="round" stroke-linejoin="round"/>
<text x="1131" y="226" font-size="27.5" fill="#3c3c3c" textLength="24.5" lengthAdjust="spacingAndGlyphs" >%</text>
<circle cx="1184.6" cy="211.8" r="4.9" fill="#1f1f1f" />
<path d="M1189.500 211 q1.200 9.500 -9.500 14.300 l-0.800 -1.300 q6 -3.500 5.800 -9z" fill="#1f1f1f" />
<line x1="1214.5" y1="202" x2="1214.5" y2="229" stroke="#a3a3a3" stroke-width="1.4" />
<path d="M1234.500 208.500 h10 M1238 205 l-3.500 3.500 l3.500 3.500" fill="none" stroke="#3c3c3c" stroke-width="1.2" stroke-linecap="round" stroke-linejoin="round"/>
<text x="1246" y="213.8" font-size="13.5" fill="#3c3c3c" textLength="11.5" lengthAdjust="spacingAndGlyphs" >.0</text>
<text x="1238" y="226.2" font-size="13.5" fill="#3c3c3c" textLength="19" lengthAdjust="spacingAndGlyphs" >.00</text>
<text x="1278.5" y="213.8" font-size="13.5" fill="#3c3c3c" textLength="19" lengthAdjust="spacingAndGlyphs" >.00</text>
<path d="M1274.500 221 h10 M1281 217.500 l3.500 3.500 l-3.500 3.500" fill="none" stroke="#3c3c3c" stroke-width="1.2" stroke-linecap="round" stroke-linejoin="round"/>
<text x="1286" y="226.2" font-size="13.5" fill="#3c3c3c" textLength="11.5" lengthAdjust="spacingAndGlyphs" >.0</text>
<line x1="1322" y1="141.5" x2="1322" y2="235" stroke="#a3a3a3" stroke-width="1.4" />
<rect x="1353" y="153.5" width="42.5" height="32.5" fill="#ffffff" stroke="#3c3c3c" stroke-width="1.3" />
<rect x="1361.5" y="153.5" width="8.5" height="10.8333" fill="#e0575c" />
<rect x="1370" y="153.5" width="8.5" height="10.8333" fill="#e0575c" />
<rect x="1378.5" y="153.5" width="8.5" height="10.8333" fill="#e0575c" />
<rect x="1361.5" y="164.333" width="8.5" height="10.8333" fill="#3f7fd9" />
<rect x="1370" y="164.333" width="8.5" height="10.8333" fill="#e0575c" />
<rect x="1361.5" y="175.167" width="8.5" height="10.8333" fill="#e0575c" />
<rect x="1370" y="175.167" width="8.5" height="10.8333" fill="#e0575c" />
<rect x="1378.5" y="175.167" width="8.5" height="10.8333" fill="#e0575c" />
<line x1="1361.5" y1="153.5" x2="1361.5" y2="186" stroke="#3c3c3c" stroke-width="1" />
<line x1="1370" y1="153.5" x2="1370" y2="186" stroke="#3c3c3c" stroke-width="1" />
<line x1="1378.5" y1="153.5" x2="1378.5" y2="186" stroke="#3c3c3c" stroke-width="1" />
<line x1="1387" y1="153.5" x2="1387" y2="186" stroke="#3c3c3c" stroke-width="1" />
<line x1="1353" y1="164.333" x2="1395.5" y2="164.333" stroke="#3c3c3c" stroke-width="1" />
<line x1="1353" y1="175.167" x2="1395.5" y2="175.167" stroke="#3c3c3c" stroke-width="1" />
<rect x="1353" y="153.5" width="42.5" height="32.5" fill="none" stroke="#3c3c3c" stroke-width="1.3" />
<path d="M1406.8 167.9 L1411 172.1 L1415.2 167.9" fill="none" stroke="#3c3c3c" stroke-width="1.8" stroke-linecap="round" stroke-linejoin="round"/>
<text x="1341" y="215.5" font-size="16.5" fill="#2b2b2b" textLength="87" lengthAdjust="spacingAndGlyphs" stroke="#2b2b2b" stroke-width="0.3">Conditional</text>
<text x="1342" y="233.5" font-size="16.5" fill="#2b2b2b" textLength="84" lengthAdjust="spacingAndGlyphs" stroke="#2b2b2b" stroke-width="0.3">Formatting</text>
<rect x="1442.5" y="153.5" width="42.5" height="32.5" fill="#ffffff" stroke="#3c3c3c" stroke-width="1.3" />
<rect x="1456.67" y="164.333" width="14.1667" height="10.8333" fill="#3f7fd9" />
<rect x="1470.83" y="164.333" width="14.1667" height="10.8333" fill="#3f7fd9" />
<rect x="1456.67" y="175.167" width="14.1667" height="10.8333" fill="#3f7fd9" />
<rect x="1470.83" y="175.167" width="14.1667" height="10.8333" fill="#3f7fd9" />
<line x1="1456.67" y1="153.5" x2="1456.67" y2="186" stroke="#3c3c3c" stroke-width="1" />
<line x1="1470.83" y1="153.5" x2="1470.83" y2="186" stroke="#3c3c3c" stroke-width="1" />
<line x1="1442.5" y1="164.333" x2="1485" y2="164.333" stroke="#3c3c3c" stroke-width="1" />
<line x1="1442.5" y1="175.167" x2="1485" y2="175.167" stroke="#3c3c3c" stroke-width="1" />
<rect x="1442.5" y="153.5" width="42.5" height="32.5" fill="none" stroke="#3c3c3c" stroke-width="1.3" />
<path d="M1484 163 q3 -1 3.500 2.500 l-13 20 l-5 -3 z" fill="#f6f6f6" stroke="#3c3c3c" stroke-width="1.2" stroke-linecap="round" stroke-linejoin="round"/>
<path d="M1469.5 182.5 l5 3 q-2 8 -14 8.500 q5 -3 9 -11.500z" fill="#3f7fd9" stroke="#2a5fa8" stroke-width="1" stroke-linecap="round" stroke-linejoin="round"/>
<path d="M1495.8 167.9 L1500 172.1 L1504.2 167.9" fill="none" stroke="#3c3c3c" stroke-width="1.8" stroke-linecap="round" stroke-linejoin="round"/>
<text x="1444.5" y="215.5" font-size="16.5" fill="#2b2b2b" textLength="53.5" lengthAdjust="spacingAndGlyphs" stroke="#2b2b2b" stroke-width="0.3">Format</text>
<text x="1440" y="233.5" font-size="16.5" fill="#2b2b2b" textLength="63" lengthAdjust="spacingAndGlyphs" stroke="#2b2b2b" stroke-width="0.3">as Table</text>
<rect x="1519" y="153.5" width="42.5" height="32.5" fill="#ffffff" stroke="#3c3c3c" stroke-width="1.3" />
<rect x="1519" y="153.5" width="42.5" height="10.8333" fill="#fff" />
<line x1="1519" y1="164.333" x2="1561.5" y2="164.333" stroke="#3c3c3c" stroke-width="1" />
<line x1="1519" y1="175.167" x2="1561.5" y2="175.167" stroke="#3c3c3c" stroke-width="1" />
<rect x="1519" y="153.5" width="42.5" height="32.5" fill="none" stroke="#3c3c3c" stroke-width="1.3" />
<rect x="1527" y="160" width="27" height="20" fill="#3f7fd9" />
<rect x="1519" y="153.5" width="42.5" height="32.5" fill="none" stroke="#3c3c3c" stroke-width="1.3" />
<line x1="1527" y1="153.5" x2="1527" y2="186" stroke="#3c3c3c" stroke-width="1" />
<line x1="1519" y1="160" x2="1561.5" y2="160" stroke="#3c3c3c" stroke-width="1" />
<path d="M1561 163 q3 -1 3.500 2.500 l-13 20 l-5 -3 z" fill="#f6f6f6" stroke="#3c3c3c" stroke-width="1.2" stroke-linecap="round" stroke-linejoin="round"/>
<path d="M1546.5 182.5 l5 3 q-2 8 -14 8.500 q5 -3 9 -11.500z" fill="#3f7fd9" stroke="#2a5fa8" stroke-width="1" stroke-linecap="round" stroke-linejoin="round"/>
<path d="M1573.3 167.9 L1577.5 172.1 L1581.7 167.9" fill="none" stroke="#3c3c3c" stroke-width="1.8" stroke-linecap="round" stroke-linejoin="round"/>
<text x="1534" y="215.5" font-size="16.5" fill="#2b2b2b" textLength="28" lengthAdjust="spacingAndGlyphs" stroke="#2b2b2b" stroke-width="0.3">Cell</text>
<text x="1525" y="233.5" font-size="16.5" fill="#2b2b2b" textLength="46.5" lengthAdjust="spacingAndGlyphs" stroke="#2b2b2b" stroke-width="0.3">Styles</text>
<line x1="1603" y1="141.5" x2="1603" y2="235" stroke="#a3a3a3" stroke-width="1.4" />
<rect x="1625" y="153.5" width="42.5" height="32.5" fill="#ffffff" stroke="#3c3c3c" stroke-width="1.3" />
<rect x="1639.17" y="164.333" width="14.1667" height="10.8333" fill="#3f7fd9" />
<rect x="1653.33" y="164.333" width="14.1667" height="10.8333" fill="#3f7fd9" />
<line x1="1639.17" y1="153.5" x2="1639.17" y2="186" stroke="#3c3c3c" stroke-width="1" />
<line x1="1653.33" y1="153.5" x2="1653.33" y2="186" stroke="#3c3c3c" stroke-width="1" />
<line x1="1625" y1="164.333" x2="1667.5" y2="164.333" stroke="#3c3c3c" stroke-width="1" />
<line x1="1625" y1="175.167" x2="1667.5" y2="175.167" stroke="#3c3c3c" stroke-width="1" />
<rect x="1625" y="153.5" width="42.5" height="32.5" fill="none" stroke="#3c3c3c" stroke-width="1.3" />
<rect x="1636" y="164.5" width="33" height="10.5" fill="#3f7fd9" />
<path d="M1622 169.800 H1642 M1628 164 l-6 5.800 l6 5.800" fill="none" stroke="#9ab0c9" stroke-width="1.6" stroke-linecap="round" stroke-linejoin="round"/>
<path d="M1679.3 167.9 L1683.5 172.1 L1687.7 167.9" fill="none" stroke="#3c3c3c" stroke-width="1.8" stroke-linecap="round" stroke-linejoin="round"/>
<text x="1633.5" y="215.5" font-size="16.5" fill="#2b2b2b" textLength="42" lengthAdjust="spacingAndGlyphs" stroke="#2b2b2b" stroke-width="0.3">Insert</text>
<rect x="1702" y="153.5" width="42.5" height="32.5" fill="#ffffff" stroke="#3c3c3c" stroke-width="1.3" />
<rect x="1716.17" y="164.333" width="14.1667" height="10.8333" fill="#3f7fd9" />
<line x1="1716.17" y1="153.5" x2="1716.17" y2="186" stroke="#3c3c3c" stroke-width="1" />
<line x1="1730.33" y1="153.5" x2="1730.33" y2="186" stroke="#3c3c3c" stroke-width="1" />
<line x1="1702" y1="164.333" x2="1744.5" y2="164.333" stroke="#3c3c3c" stroke-width="1" />
<line x1="1702" y1="175.167" x2="1744.5" y2="175.167" stroke="#3c3c3c" stroke-width="1" />
<rect x="1702" y="153.5" width="42.5" height="32.5" fill="none" stroke="#3c3c3c" stroke-width="1.3" />
<path d="M1708 164.500 h18 l5 5.300 l-5 5.300 h-18 z" fill="#3f7fd9" />
<path d="M1730 161 l16 17 M1746 161 l-16 17" fill="none" stroke="#e0474c" stroke-width="1.5" stroke-linecap="round" stroke-linejoin="round"/>
<path d="M1756.3 167.9 L1760.5 172.1 L1764.7 167.9" fill="none" stroke="#3c3c3c" stroke-width="1.8" stroke-linecap="round" stroke-linejoin="round"/>
<text x="1707.5" y="215.5" font-size="16.5" fill="#2b2b2b" textLength="48.5" lengthAdjust="spacingAndGlyphs" stroke="#2b2b2b" stroke-width="0.3">Delete</text>
<rect x="1780" y="153.5" width="42.5" height="32.5" fill="#ffffff" stroke="#3c3c3c" stroke-width="1.3" />
<rect x="1794.17" y="164.333" width="14.1667" height="10.8333" fill="#3f7fd9" />
<line x1="1794.17" y1="153.5" x2="1794.17" y2="186" stroke="#3c3c3c" stroke-width="1" />
<line x1="1808.33" y1="153.5" x2="1808.33" y2="186" stroke="#3c3c3c" stroke-width="1" />
<line x1="1780" y1="164.333" x2="1822.5" y2="164.333" stroke="#3c3c3c" stroke-width="1" />
<line x1="1780" y1="175.167" x2="1822.5" y2="175.167" stroke="#3c3c3c" stroke-width="1" />
<rect x="1780" y="153.5" width="42.5" height="32.5" fill="none" stroke="#3c3c3c" stroke-width="1.3" />
<rect x="1791" y="164.5" width="20" height="10.5" fill="#3f7fd9" />
<path d="M1788 147 H1813 M1788 145 v4 M1813 145 v4" fill="none" stroke="#6a9ad6" stroke-width="1.2" />
<path d="M1833.3 167.9 L1837.5 172.1 L1841.7 167.9" fill="none" stroke="#3c3c3c" stroke-width="1.8" stroke-linecap="round" stroke-linejoin="round"/>
<text x="1783" y="215.5" font-size="16.5" fill="#2b2b2b" textLength="53.5" lengthAdjust="spacingAndGlyphs" stroke="#2b2b2b" stroke-width="0.3">Format</text>
<line x1="1863.5" y1="141.5" x2="1863.5" y2="235" stroke="#a3a3a3" stroke-width="1.4" />
<path d="M1904 150.500 V147.500 H1888 L1897 157 L1888 167 H1904.500 V164" fill="none" stroke="#3c3c3c" stroke-width="1.6" stroke-linecap="round" stroke-linejoin="round"/>
<text x="1918.5" y="162.5" font-size="16.5" fill="#2b2b2b" textLength="74.5" lengthAdjust="spacingAndGlyphs" stroke="#2b2b2b" stroke-width="0.3">Auto-sum</text>
<path d="M2002.8 155.4 L2007 159.6 L2011.2 155.4" fill="none" stroke="#3c3c3c" stroke-width="1.8" stroke-linecap="round" stroke-linejoin="round"/>
<rect x="1884.5" y="182" width="22.5" height="18.5" fill="#ffffff" stroke="#3c3c3c" stroke-width="1.4" />
<line x1="1884.5" y1="185.5" x2="1907" y2="185.5" stroke="#3c3c3c" stroke-width="1.2" />
<path d="M1895.800 188 v9 M1892 193.500 l3.800 3.800 l3.800 -3.800" fill="none" stroke="#3f7fd9" stroke-width="1.4" stroke-linecap="round" stroke-linejoin="round"/>
<text x="1918.5" y="197" font-size="16.5" fill="#2b2b2b" textLength="20" lengthAdjust="spacingAndGlyphs" stroke="#2b2b2b" stroke-width="0.3">Fill</text>
<path d="M1949.3 189.4 L1953.5 193.6 L1957.7 189.4" fill="none" stroke="#3c3c3c" stroke-width="1.8" stroke-linecap="round" stroke-linejoin="round"/>
<path d="M1884.500 227.500 l12 -12.500 l9 6 l-12 14 z" fill="#ffffff" stroke="#3c3c3c" stroke-width="1.4" stroke-linecap="round" stroke-linejoin="round"/>
<path d="M1884.500 227.500 l5.500 -5.700 l8.500 6.500 l-5 6.200 z" fill="#9b4fc4" />
<text x="1918.5" y="231" font-size="16.5" fill="#2b2b2b" textLength="38.5" lengthAdjust="spacingAndGlyphs" stroke="#2b2b2b" stroke-width="0.3">Clear</text>
<path d="M1967.8 223.9 L1972 228.1 L1976.2 223.9" fill="none" stroke="#3c3c3c" stroke-width="1.8" stroke-linecap="round" stroke-linejoin="round"/>
<text x="2026" y="167.2" font-size="23.5" fill="#7d8fb3" textLength="13.5" lengthAdjust="spacingAndGlyphs" >A</text>
<text x="2026" y="188.7" font-size="22.5" fill="#3c3c3c" textLength="13.5" lengthAdjust="spacingAndGlyphs" >Z</text>
<path d="M2045 160.500 h25 l-9.500 11 v11.500 h-6 v-11.500 z" fill="none" stroke="#3c3c3c" stroke-width="1.5" stroke-linecap="round" stroke-linejoin="round"/>
<path d="M2080.8 167.9 L2085 172.1 L2089.2 167.9" fill="none" stroke="#3c3c3c" stroke-width="1.8" stroke-linecap="round" stroke-linejoin="round"/>
<text x="2033" y="215.5" font-size="16.5" fill="#2b2b2b" textLength="47" lengthAdjust="spacingAndGlyphs" stroke="#2b2b2b" stroke-width="0.3">Sort &amp;</text>
<text x="2037.5" y="233.5" font-size="16.5" fill="#2b2b2b" textLength="38.5" lengthAdjust="spacingAndGlyphs" stroke="#2b2b2b" stroke-width="0.3">Filter</text>
<circle cx="2130.2" cy="164" r="15.8" fill="none" stroke="#3c3c3c" stroke-width="1.5" />
<line x1="2118.8" y1="175.5" x2="2102.8" y2="191.5" stroke="#3c3c3c" stroke-width="1.7" stroke-linecap="round"/>
<path d="M2157.8 167.9 L2162 172.1 L2166.2 167.9" fill="none" stroke="#3c3c3c" stroke-width="1.8" stroke-linecap="round" stroke-linejoin="round"/>
<text x="2107.5" y="215.5" font-size="16.5" fill="#2b2b2b" textLength="48.5" lengthAdjust="spacingAndGlyphs" stroke="#2b2b2b" stroke-width="0.3">Find &amp;</text>
<text x="2108.5" y="233.5" font-size="16.5" fill="#2b2b2b" textLength="48.5" lengthAdjust="spacingAndGlyphs" stroke="#2b2b2b" stroke-width="0.3">Select</text>
<rect x="12.3" y="252" width="125.7" height="35.5" fill="#ffffff" rx="5" stroke="#999" stroke-width="1.6" />
<line x1="115" y1="253" x2="115" y2="287" stroke="#a9a9a9" stroke-width="1.3" />
<text x="25.5" y="275.6" font-size="18.5" fill="#2a2a2a" textLength="23" lengthAdjust="spacingAndGlyphs" stroke="#2a2a2a" stroke-width="0.3">D3</text>
<path d="M123 264.500 l4.800 -7 l4.800 7z" fill="#7a7a7a" />
<path d="M123 274.500 l4.800 7.300 l4.800 -7.300z" fill="#7a7a7a" />
<line x1="140" y1="252" x2="140" y2="290" stroke="#cfcfcf" stroke-width="2" />
<path d="M165 263 l13.500 13.500 M178.500 263 l-13.500 13.500" fill="none" stroke="#cfcfcf" stroke-width="2.2" stroke-linecap="round" stroke-linejoin="round"/>
<path d="M208 271 l6.500 6.500 l13 -14" fill="none" stroke="#cfcfcf" stroke-width="2.4" stroke-linecap="round" stroke-linejoin="round"/>
<text x="253" y="277" font-size="24" fill="#3a3a3a" textLength="22" lengthAdjust="spacingAndGlyphs" font-family="'Liberation Serif',serif" font-style="italic" >fx</text>
<line x1="287" y1="258" x2="287" y2="282" stroke="#d9d9d9" stroke-width="1.2" />
<path d="M2211.500 266 h11 l-5.500 7 z" fill="#555" />
<rect x="10" y="1217.5" width="2218.6" height="41.5" fill="#f5f5f5" />
<line x1="10" y1="1218" x2="2228.6" y2="1218" stroke="#c9c9c9" stroke-width="1.2" />
<line x1="10" y1="1258.5" x2="2228.6" y2="1258.5" stroke="#c4c4c4" stroke-width="1.5" />
<path d="M44.500 1230 v16 l-11.500 -8 z" fill="#555" />
<path d="M69 1230 v16 l11.500 -8 z" fill="#555" />
<line x1="103" y1="1222" x2="103" y2="1253" stroke="#d4d4d4" stroke-width="1.3" />
<line x1="681.5" y1="1222" x2="681.5" y2="1253" stroke="#d4d4d4" stroke-width="1.3" />
<line x1="971.5" y1="1222" x2="971.5" y2="1253" stroke="#d4d4d4" stroke-width="1.3" />
<line x1="1094" y1="1222" x2="1094" y2="1253" stroke="#d4d4d4" stroke-width="1.3" />
<line x1="1262" y1="1222" x2="1262" y2="1253" stroke="#d4d4d4" stroke-width="1.3" />
<line x1="1446.5" y1="1222" x2="1446.5" y2="1253" stroke="#d4d4d4" stroke-width="1.3" />
<line x1="1630" y1="1222" x2="1630" y2="1253" stroke="#d4d4d4" stroke-width="1.3" />
<line x1="1816" y1="1222" x2="1816" y2="1253" stroke="#d4d4d4" stroke-width="1.3" />
<line x1="1949.5" y1="1222" x2="1949.5" y2="1253" stroke="#d4d4d4" stroke-width="1.3" />
<line x1="2123" y1="1222" x2="2123" y2="1253" stroke="#d4d4d4" stroke-width="1.3" />
<line x1="2181.5" y1="1222" x2="2181.5" y2="1253" stroke="#d4d4d4" stroke-width="1.3" />
<defs><filter id="ts" x="-5%" y="-5%" width="110%" height="130%"><feGaussianBlur stdDeviation="1.2"/></filter></defs>
<rect x="330" y="1219" width="173" height="34" fill="#bdbdbd" rx="3" filter="url(#ts)"/>
<path d="M330 1217 H503 V1248.500 Q503 1251.500 500 1251.500 H333 Q330 1251.500 330 1248.500 Z" fill="#fdfdfd" />
<text x="134" y="1242.5" font-size="17.5" fill="#7a7a7a" textLength="166" lengthAdjust="spacingAndGlyphs" stroke="#7a7a7a" stroke-width="0.3">Watchlist screening</text>
<text x="531.5" y="1242.5" font-size="17.5" fill="#7a7a7a" textLength="122.5" lengthAdjust="spacingAndGlyphs" stroke="#7a7a7a" stroke-width="0.3">Chart patterns</text>
<text x="715" y="1242.5" font-size="17.5" fill="#7a7a7a" textLength="224.5" lengthAdjust="spacingAndGlyphs" stroke="#7a7a7a" stroke-width="0.3">Benefits of staying in cash</text>
<text x="1002" y="1242.5" font-size="17.5" fill="#7a7a7a" textLength="62" lengthAdjust="spacingAndGlyphs" stroke="#7a7a7a" stroke-width="0.3">Volume</text>
<text x="1122" y="1242.5" font-size="17.5" fill="#7a7a7a" textLength="112" lengthAdjust="spacingAndGlyphs" stroke="#7a7a7a" stroke-width="0.3">Sell checklist</text>
<text x="1290" y="1242.5" font-size="17.5" fill="#7a7a7a" textLength="128.5" lengthAdjust="spacingAndGlyphs" stroke="#7a7a7a" stroke-width="0.3">Exhaustion top</text>
<text x="1475.5" y="1242.5" font-size="17.5" fill="#7a7a7a" textLength="126" lengthAdjust="spacingAndGlyphs" stroke="#7a7a7a" stroke-width="0.3">Buying a stock</text>
<text x="1658.5" y="1242.5" font-size="17.5" fill="#7a7a7a" textLength="129.5" lengthAdjust="spacingAndGlyphs" stroke="#7a7a7a" stroke-width="0.3">Sector analysis</text>
<text x="1843" y="1242.5" font-size="17.5" fill="#7a7a7a" textLength="80" lengthAdjust="spacingAndGlyphs" stroke="#7a7a7a" stroke-width="0.3">Holy grail</text>
<text x="358" y="1242.5" font-size="17.5" fill="#3f7a50" font-weight="bold" textLength="117" lengthAdjust="spacingAndGlyphs" >Buy checklist</text>
<defs><linearGradient id="fade" x1="0" x2="1" y1="0" y2="0"><stop offset="0" stop-color="#7a7a7a"/><stop offset="0.72" stop-color="#7a7a7a"/><stop offset="1" stop-color="#7a7a7a" stop-opacity="0.15"/></linearGradient></defs>
<text x="1979" y="1242.5" font-size="17.5" fill="url(#fade)" textLength="124" lengthAdjust="spacingAndGlyphs" >Risk managem</text>
<path d="M2146 1237.500 h15 M2153.500 1230 v15" fill="none" stroke="#4a4a4a" stroke-width="2.8" />
<defs><linearGradient id="sb" x1="0" x2="0" y1="0" y2="1"><stop offset="0" stop-color="#ededed"/><stop offset="0.55" stop-color="#e0e0e0"/><stop offset="1" stop-color="#bdbdbd"/></linearGradient></defs>
<path d="M10 1259.500 H2228.6 V1283 Q2228.6 1296 2215.6 1296 H23 Q10 1296 10 1283 Z" fill="#2a2a2a" />
<path d="M10 1259.500 H2228.6 V1281 Q2228.6 1293.500 2216.1 1293.500 H22.5 Q10 1293.500 10 1281 Z" fill="url(#sb)" />
<text x="47.5" y="1281.5" font-size="17" fill="#707070" textLength="53" lengthAdjust="spacingAndGlyphs" stroke="#707070" stroke-width="0.3">Ready</text>
<rect x="1736" y="1258.5" width="57" height="33.5" fill="#3a3a3a" />
<rect x="1755" y="1266" width="18" height="18" fill="none" stroke="#f5f5f5" stroke-width="1.6" />
<line x1="1761" y1="1266" x2="1761" y2="1284" stroke="#f5f5f5" stroke-width="1.4" />
<line x1="1755" y1="1272" x2="1773" y2="1272" stroke="#f5f5f5" stroke-width="1.4" />
<line x1="1767" y1="1266" x2="1767" y2="1284" stroke="#f5f5f5" stroke-width="1.4" />
<line x1="1755" y1="1278" x2="1773" y2="1278" stroke="#f5f5f5" stroke-width="1.4" />
<rect x="1810" y="1266.5" width="18" height="17.5" fill="none" rx="2" stroke="#4a4a4a" stroke-width="1.5" />
<rect x="1814.5" y="1270.5" width="9" height="9.5" fill="none" stroke="#4a4a4a" stroke-width="1.2" />
<line x1="1816.5" y1="1273.5" x2="1821.5" y2="1273.5" stroke="#4a4a4a" stroke-width="1" />
<line x1="1816.5" y1="1276.5" x2="1821.5" y2="1276.5" stroke="#4a4a4a" stroke-width="1" />
<rect x="1864" y="1266.5" width="19" height="17.5" fill="none" stroke="#4a4a4a" stroke-width="1.5" />
<path d="M1870 1266.500 v9 h7.500 v-9" fill="none" stroke="#4a4a4a" stroke-width="1.4" />
<line x1="1915.5" y1="1275.5" x2="1926" y2="1275.5" stroke="#4a4a4a" stroke-width="2.6" />
<line x1="1941" y1="1275.8" x2="2089" y2="1275.8" stroke="#2f2f2f" stroke-width="6" stroke-linecap="round"/>
<circle cx="2021.8" cy="1275.3" r="12.3" fill="#fdfdfd" stroke="#8a8a8a" stroke-width="1.4" />
<path d="M2102.500 1275.500 h12 M2108.500 1269.500 v12" fill="none" stroke="#3a3a3a" stroke-width="2.4" />
<text x="2142.5" y="1282" font-size="17.5" fill="#707070" textLength="48" lengthAdjust="spacingAndGlyphs" stroke="#707070" stroke-width="0.3">136%</text>
<path d="M62 1334 V1313 Q62 1299.500 75.500 1299.500 H2162.500 Q2176 1299.500 2176 1313 V1334 Z" fill="#d1d1d3" />
<line x1="72" y1="1300.5" x2="2166" y2="1300.5" stroke="#e6e6e6" stroke-width="1" />
<defs><clipPath id="dockclip"><rect x="62" y="1300" width="2114" height="33.500"/></clipPath></defs>
<rect x="74" y="1311" width="51" height="51" fill="#4aa7ee" rx="12" clip-path="url(#dockclip)"/>
<path d="M100.0 1311 h13 q12 0 12 12 v12 h-25 z" fill="#f2f2f2" clip-path="url(#dockclip)"/>
<rect x="91" y="1327" width="2" height="5" fill="#1d4f8a" />
<rect x="110" y="1327" width="2" height="5" fill="#333" />
<rect x="140.03" y="1311" width="51" height="51" fill="#e9e9e9" rx="12" clip-path="url(#dockclip)"/>
<rect x="148.03" y="1322" width="9.5" height="8" fill="#5fd66a" rx="2" />
<rect x="160.53" y="1322" width="9.5" height="8" fill="#f6b731" rx="2" />
<rect x="173.03" y="1322" width="9.5" height="8" fill="#f0883a" rx="2" />
<rect x="148.03" y="1332" width="9.5" height="3" fill="#f0544f" rx="1" />
<rect x="160.53" y="1332" width="9.5" height="3" fill="#3a8fe6" rx="1" />
<rect x="173.03" y="1332" width="9.5" height="3" fill="#b06ae0" rx="1" />
<rect x="206.06" y="1311" width="51" height="51" fill="#fafafa" rx="12" clip-path="url(#dockclip)"/>
<circle cx="231.56" cy="1340" r="21" fill="#3a8fe6" clip-path="url(#dockclip)"/>
<line x1="226.06" y1="1334" x2="244.06" y2="1321" stroke="#e8453c" stroke-width="1.6" />
<rect x="272.09" y="1311" width="51" height="51" fill="#74de6e" rx="12" clip-path="url(#dockclip)"/>
<ellipse cx="297.59" cy="1337" rx="17" ry="14" fill="#f2fff2" clip-path="url(#dockclip)"/>
<rect x="338.12" y="1311" width="51" height="51" fill="#8fd48a" rx="12" clip-path="url(#dockclip)"/>
<rect x="346.12" y="1311" width="9" height="24" fill="#3a78e0" clip-path="url(#dockclip)"/>
<path d="M363.12 1334 q3 -18 26 -20 v20 z" fill="#e8e8e8" clip-path="url(#dockclip)"/>
<rect x="338.12" y="1311" width="8" height="24" fill="#f4f4f4" rx="2" clip-path="url(#dockclip)"/>
<rect x="404.15" y="1311" width="51" height="51" fill="#2f7ff0" rx="12" clip-path="url(#dockclip)"/>
<rect x="412.15" y="1326" width="35" height="10" fill="#e9f1ff" rx="2" clip-path="url(#dockclip)"/>
<rect x="470.18" y="1311" width="51" height="51" fill="#fafafa" rx="12" clip-path="url(#dockclip)"/>
<ellipse cx="486.18" cy="1326" rx="6.500" ry="6" fill="#e8453c" opacity="0.9" clip-path="url(#dockclip)"/>
<ellipse cx="495.18" cy="1322" rx="6.500" ry="6" fill="#f6a531" opacity="0.9" clip-path="url(#dockclip)"/>
<ellipse cx="504.18" cy="1326" rx="6.500" ry="6" fill="#f6d24c" opacity="0.9" clip-path="url(#dockclip)"/>
<ellipse cx="482.18" cy="1333" rx="6.500" ry="6" fill="#c0392b" opacity="0.9" clip-path="url(#dockclip)"/>
<ellipse cx="508.18" cy="1333" rx="6.500" ry="6" fill="#8fd06a" opacity="0.9" clip-path="url(#dockclip)"/>
<rect x="536.21" y="1311" width="51" height="51" fill="#6fe06a" rx="12" clip-path="url(#dockclip)"/>
<rect x="545.21" y="1327" width="24" height="10" fill="#f4fff4" rx="3" clip-path="url(#dockclip)"/>
<path d="M571.2099999999999 1333 l8 -5 v8 z" fill="#f4fff4" clip-path="url(#dockclip)"/>
<rect x="602.24" y="1311" width="51" height="51" fill="#f6f6f6" rx="12" clip-path="url(#dockclip)"/>
<path d="M602.2399999999999 1323 q0 -12 12 -12 h27 q12 0 12 12 v1 h-51 z" fill="#ea4a45" />
<text x="627.74" y="1322" font-size="8" fill="#fff" font-weight="bold" text-anchor="middle" >JUL</text>
<text x="627.74" y="1346" font-size="22" fill="#333" text-anchor="middle" clip-path="url(#dockclip)">23</text>
<rect x="668.27" y="1311" width="51" height="51" fill="#a98250" rx="12" clip-path="url(#dockclip)"/>
<rect x="734.3" y="1311" width="51" height="51" fill="#fcfcfc" rx="12" clip-path="url(#dockclip)"/>
<circle cx="744.3" cy="1322" r="2.6" fill="#3f86f0" />
<line x1="751.3" y1="1322" x2="776.3" y2="1322" stroke="#d6d6d6" stroke-width="1.6" />
<circle cx="744.3" cy="1331" r="2.6" fill="#f08a2a" />
<rect x="800.33" y="1311" width="51" height="51" fill="#fbfbfb" rx="12" clip-path="url(#dockclip)"/>
<circle cx="825.83" cy="1340" r="19" fill="#e8453c" clip-path="url(#dockclip)"/>
<path d="M825.8299999999998 1340 L807.3299999999998 1334 A19 19 0 0 0 812.3299999999998 1354 Z" fill="#3aa757" clip-path="url(#dockclip)"/>
<path d="M825.8299999999998 1340 L844.3299999999998 1334 A19 19 0 0 1 839.3299999999998 1354 Z" fill="#f6c12d" clip-path="url(#dockclip)"/>
<circle cx="825.83" cy="1340" r="8.5" fill="#fff" clip-path="url(#dockclip)"/>
<circle cx="825.83" cy="1340" r="6.5" fill="#3f86f0" clip-path="url(#dockclip)"/>
<rect x="866.36" y="1311" width="51" height="51" fill="#fbfbfb" rx="12" clip-path="url(#dockclip)"/>
<path d="M866.3599999999998 1323 q0 -12 12 -12 h27 q12 0 12 12 v3 h-51 z" fill="#f6d24c" />
<line x1="866.36" y1="1331" x2="917.36" y2="1331" stroke="#e2e2e2" stroke-width="1" />
<rect x="932.39" y="1311" width="51" height="51" fill="#1d1d1f" rx="12" clip-path="url(#dockclip)"/>
<text x="957.89" y="1338" font-size="15" fill="#d0d0d0" font-weight="bold" text-anchor="middle" clip-path="url(#dockclip)">tv</text>
<rect x="998.42" y="1311" width="51" height="51" fill="#f0474f" rx="12" clip-path="url(#dockclip)"/>
<path d="M1020.4199999999997 1336 v-12 l12 -3 v12" fill="none" stroke="#ffd9dc" stroke-width="3" clip-path="url(#dockclip)"/>
<rect x="1064.45" y="1311" width="51" height="51" fill="#9b4fe0" rx="12" clip-path="url(#dockclip)"/>
<circle cx="1089.95" cy="1340" r="14" fill="none" stroke="#e9d4ff" stroke-width="2.5" clip-path="url(#dockclip)"/>
<circle cx="1089.95" cy="1340" r="8" fill="none" stroke="#e9d4ff" stroke-width="2.5" clip-path="url(#dockclip)"/>
<rect x="1130.48" y="1311" width="51" height="51" fill="#2e9bf0" rx="12" clip-path="url(#dockclip)"/>
<rect x="1140.48" y="1320" width="31" height="14" fill="#e6e6e6" rx="2" clip-path="url(#dockclip)"/>
<circle cx="1155.98" cy="1327" r="4" fill="#5a8a5a" clip-path="url(#dockclip)"/>
<rect x="1196.51" y="1311" width="51" height="51" fill="#fbfbfb" rx="12" clip-path="url(#dockclip)"/>
<circle cx="1214.51" cy="1330" r="3.5" fill="#e8453c" clip-path="url(#dockclip)"/>
<path d="M1216.5099999999998 1334 l20 -12 l-9 12 z" fill="#1a1a1a" clip-path="url(#dockclip)"/>
<rect x="1262.54" y="1311" width="51" height="51" fill="#56d062" rx="12" clip-path="url(#dockclip)"/>
<rect x="1290.54" y="1322" width="4" height="12" fill="#d9ffd9" clip-path="url(#dockclip)"/>
<rect x="1298.54" y="1328" width="4" height="6" fill="#d9ffd9" clip-path="url(#dockclip)"/>
<rect x="1328.57" y="1311" width="51" height="51" fill="#f6a531" rx="12" clip-path="url(#dockclip)"/>
<line x1="1350.57" y1="1334" x2="1368.57" y2="1320" stroke="#fff7e6" stroke-width="3.5" />
<rect x="1394.6" y="1311" width="51" height="51" fill="#3b3b3f" rx="12" clip-path="url(#dockclip)"/>
<circle cx="1420.1" cy="1340" r="21" fill="#3a8fe6" clip-path="url(#dockclip)"/>
<rect x="1460.63" y="1311" width="51" height="51" fill="#3a9af0" rx="12" clip-path="url(#dockclip)"/>
<text x="1486.13" y="1334" font-size="15" fill="#e8f4ff" font-weight="bold" text-anchor="middle" clip-path="url(#dockclip)">X</text>
<rect x="1526.66" y="1311" width="51" height="51" fill="#d8d8da" rx="12" clip-path="url(#dockclip)"/>
<circle cx="1552.16" cy="1340" r="21" fill="#3a3a3c" clip-path="url(#dockclip)"/>
<circle cx="1552.16" cy="1340" r="15" fill="#8a8a8c" clip-path="url(#dockclip)"/>
<line x1="1601" y1="1306" x2="1601" y2="1333" stroke="#a9a9ab" stroke-width="1.4" />
<rect x="1621.5" y="1311" width="51" height="51" fill="#b9bdf0" rx="12" clip-path="url(#dockclip)"/>
<rect x="1625" y="1314.5" width="44" height="44" fill="#cfd3f6" rx="9" clip-path="url(#dockclip)"/>
<rect x="1688.5" y="1311" width="50" height="51" fill="#fbfbfb" rx="12" clip-path="url(#dockclip)"/>
<rect x="1695" y="1320" width="16" height="14" fill="#1f7a45" rx="2" clip-path="url(#dockclip)"/>
<rect x="1709" y="1318" width="20" height="16" fill="#3aa360" rx="2" clip-path="url(#dockclip)"/>
<rect x="1754" y="1311" width="51" height="51" fill="#fbfbfb" rx="12" clip-path="url(#dockclip)"/>
<circle cx="1779.5" cy="1340" r="21" fill="#3aa0e8" clip-path="url(#dockclip)"/>
<path d="M1768 1334 l20 -8 l-6 8 z" fill="#eaf5ff" clip-path="url(#dockclip)"/>
<rect x="1820" y="1311" width="51" height="51" fill="#fbfbfb" rx="12" clip-path="url(#dockclip)"/>
<circle cx="1845.5" cy="1340" r="21" fill="#f29a2a" clip-path="url(#dockclip)"/>
<path d="M1840 1328 l12 8 h-12 z" fill="#3a2a1a" clip-path="url(#dockclip)"/>
<rect x="1885" y="1311" width="55" height="51" fill="#3a7af0" rx="12" clip-path="url(#dockclip)"/>
<rect x="1896" y="1326" width="20" height="10" fill="#f4f8ff" rx="3" clip-path="url(#dockclip)"/>
<path d="M1918 1332 l8 -5 v8 z" fill="#f4f8ff" clip-path="url(#dockclip)"/>
<line x1="1960" y1="1306" x2="1960" y2="1333" stroke="#a9a9ab" stroke-width="1.4" />
<rect x="1991" y="1310" width="34" height="30" fill="#ececec" rx="2" stroke="#bdbdbd" stroke-width="1" clip-path="url(#dockclip)"/>
<rect x="1996" y="1307" width="26" height="10" fill="#dcdcdc" rx="2" />
<rect x="2044" y="1321" width="62" height="14" fill="#a9cdf0" clip-path="url(#dockclip)"/>
<rect x="2044" y="1325" width="62" height="10" fill="#c9e0f6" clip-path="url(#dockclip)"/>
<path d="M2118 1312 h42 l-3 22 h-36 z" fill="#e4e4e6" stroke="#c9c9cb" stroke-width="1" clip-path="url(#dockclip)"/>
<path d="M2126 1310 l6 6 l6 -7 l8 6 l6 -5" fill="none" stroke="#9a9a9c" stroke-width="1.5" />
<rect x="0" y="1333.5" width="2240" height="54" fill="#1b1b1b" />
<rect x="41.5" y="1340" width="7" height="13" fill="#a9a9a9" rx="3.5" />
<path d="M37.500 1349 a7.500 7.500 0 0 0 15 0 M45 1356.500 v4.500 M41 1361.500 h8" fill="none" stroke="#a9a9a9" stroke-width="1.6" stroke-linecap="round" stroke-linejoin="round"/>
<line x1="35" y1="1362" x2="57" y2="1339" stroke="#e8453c" stroke-width="1.8" />
<path d="M73.500 1353.500 l3.500 -3.500 l3.500 3.500" fill="none" stroke="#c9c9c9" stroke-width="1.5" stroke-linecap="round" stroke-linejoin="round"/>
<text x="24" y="1378" font-size="12.5" fill="#d6d6d6" textLength="43" lengthAdjust="spacingAndGlyphs" >Unmute</text>
<rect x="127" y="1344" width="18" height="14" fill="#a9a9a9" rx="3" />
<path d="M146 1350 l6 -4.500 v11 l-6 -4.500z" fill="#a9a9a9" />
<line x1="127" y1="1362" x2="151" y2="1339" stroke="#e8453c" stroke-width="1.8" />
<path d="M172 1353.500 l3.500 -3.500 l3.500 3.500" fill="none" stroke="#c9c9c9" stroke-width="1.5" stroke-linecap="round" stroke-linejoin="round"/>
<text x="109" y="1378" font-size="12.5" fill="#d6d6d6" textLength="59" lengthAdjust="spacingAndGlyphs" >Start Video</text>
<circle cx="897" cy="1346.5" r="4.2" fill="#a9a9a9" />
<path d="M888.500 1360 q0 -8 8.500 -8 q8.500 0 8.500 8 z" fill="#a9a9a9" />
<circle cx="907" cy="1347" r="3.5" fill="#a9a9a9" />
<path d="M906 1352 q8 0 8 8 h-6 q0 -5 -2 -8z" fill="#a9a9a9" />
<text x="917.5" y="1353" font-size="12" fill="#d6d6d6" >82</text>
<path d="M950 1353.500 l3.500 -3.500 l3.500 3.500" fill="none" stroke="#c9c9c9" stroke-width="1.5" stroke-linecap="round" stroke-linejoin="round"/>
<text x="870.25" y="1378" font-size="12.5" fill="#d6d6d6" textLength="62.5" lengthAdjust="spacingAndGlyphs" >Participants</text>
<path d="M1002 1342 h17 q2.500 0 2.500 2.500 v10 q0 2.500 -2.500 2.500 h-8 l-5 4 v-4 h-4 q-2.500 0 -2.500 -2.500 v-10 q0 -2.500 2.500 -2.500z" fill="#a9a9a9" />
<path d="M1040 1353.500 l3.500 -3.500 l3.500 3.500" fill="none" stroke="#c9c9c9" stroke-width="1.5" stroke-linecap="round" stroke-linejoin="round"/>
<text x="999" y="1378" font-size="12.5" fill="#d6d6d6" textLength="24" lengthAdjust="spacingAndGlyphs" >Chat</text>
<rect x="1092.5" y="1342.5" width="24.5" height="18.5" fill="#23d05a" rx="4" />
<path d="M1104.800 1357 v-10 M1100.500 1351 l4.300 -4.300 l4.300 4.300" fill="none" stroke="#10351c" stroke-width="2" stroke-linecap="round" stroke-linejoin="round"/>
<text x="1070" y="1378" font-size="12.5" fill="#2ad463" textLength="69" lengthAdjust="spacingAndGlyphs" >Share Screen</text>
<circle cx="1193.5" cy="1351.5" r="9" fill="none" stroke="#a9a9a9" stroke-width="1.6" />
<circle cx="1193.5" cy="1351.5" r="5.6" fill="#a9a9a9" />
<text x="1175" y="1378" font-size="12.5" fill="#d6d6d6" textLength="37" lengthAdjust="spacingAndGlyphs" >Record</text>
<circle cx="1273" cy="1352.5" r="8.5" fill="#a9a9a9" />
<circle cx="1270" cy="1350.5" r="1.2" fill="#1b1b1b" />
<circle cx="1276" cy="1350.5" r="1.2" fill="#1b1b1b" />
<path d="M1269 1354.500 q4 4 8 0" fill="none" stroke="#1b1b1b" stroke-width="1.3" />
<path d="M1279.500 1343 h5 M1282 1340.500 v5" fill="none" stroke="#c9c9c9" stroke-width="1.3" />
<text x="1248" y="1378" font-size="12.5" fill="#d6d6d6" textLength="51" lengthAdjust="spacingAndGlyphs" >Reactions</text>
<path d="M1346 1349.500 v-3 q0 -2 2 -2 h3 M1346 1354.500 v3 q0 2 2 2 h3 M1361 1354.500 v3 q0 2 -2 2 h-3" fill="none" stroke="#a9a9a9" stroke-width="1.7" stroke-linecap="round" stroke-linejoin="round"/>
<circle cx="1358.5" cy="1346.5" r="2.6" fill="none" stroke="#a9a9a9" stroke-width="1.6" />
<text x="1340" y="1378" font-size="12.5" fill="#d6d6d6" textLength="27" lengthAdjust="spacingAndGlyphs" >Apps</text>
<rect x="1434" y="1343.5" width="18" height="14" fill="none" rx="2.5" stroke="#a9a9a9" stroke-width="1.7" />
<rect x="1442" y="1353" width="10" height="5.5" fill="#a9a9a9" rx="1.5" />
<text x="1409" y="1378" font-size="12.5" fill="#d6d6d6" textLength="68" lengthAdjust="spacingAndGlyphs" >Whiteboards</text>
<rect x="2167.5" y="1347.5" width="60" height="26" fill="#d02b2b" rx="6" />
<text x="2180.5" y="1363.8" font-size="12.5" fill="#ffffff" font-weight="bold" textLength="32.5" lengthAdjust="spacingAndGlyphs" >Leave</text>
</svg>
</body></html>
